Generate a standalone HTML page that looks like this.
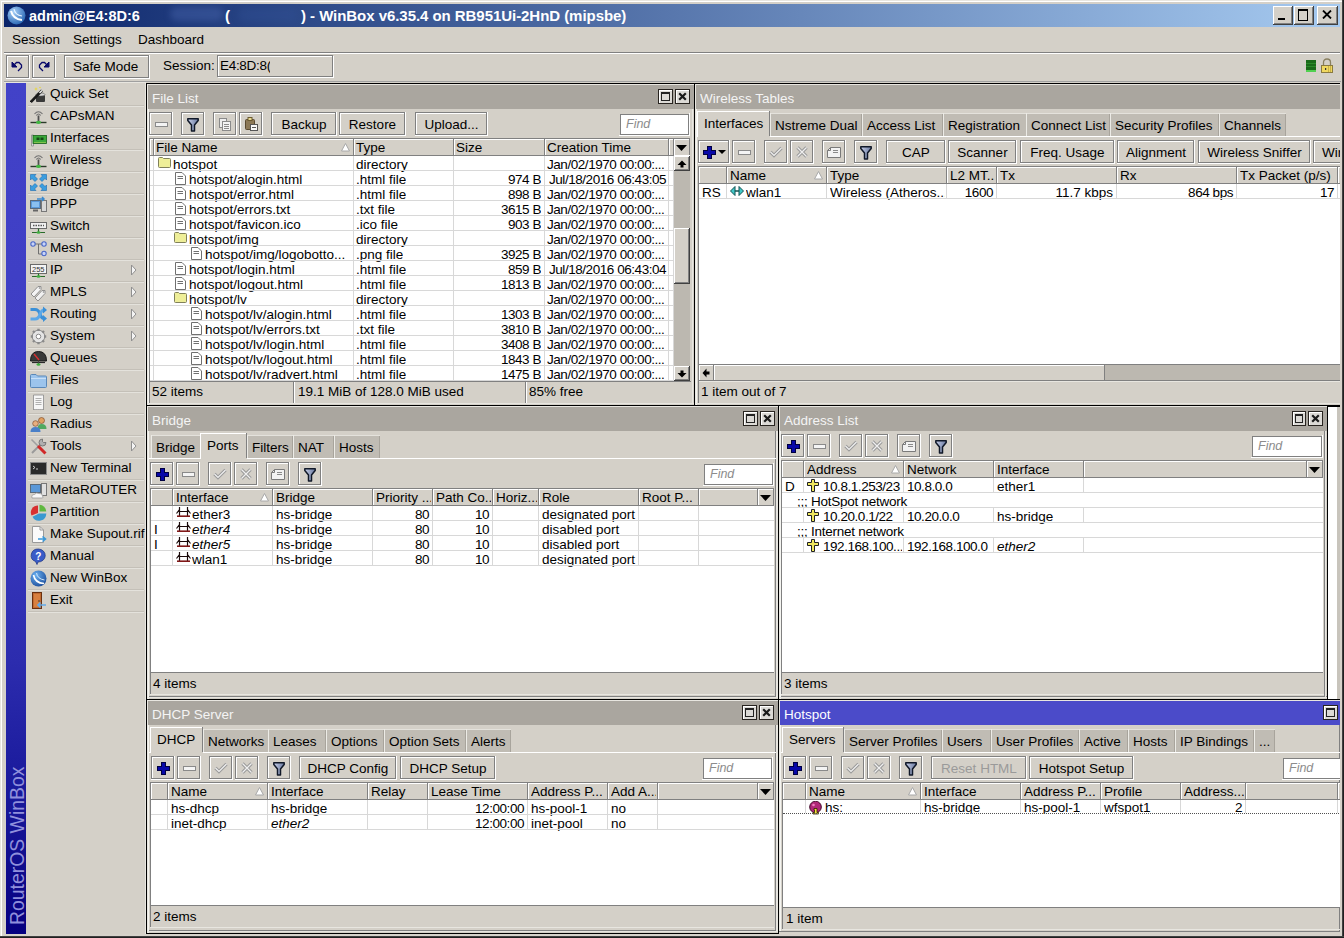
<!DOCTYPE html>
<html><head><meta charset="utf-8"><style>
html,body{margin:0;padding:0;}
body{width:1344px;height:938px;overflow:hidden;position:relative;background:#d4d0c8;font-family:"Liberation Sans",sans-serif;}
#root>div,#root>svg{position:absolute;}
#root>div{white-space:nowrap;}
#root{position:absolute;left:0;top:0;width:1344px;height:938px;overflow:hidden;}
</style></head><body><div id="root">
<div style="left:0px;top:0px;width:1344px;height:938px;background:#d4d0c8;"></div>
<div style="left:0px;top:0px;width:1344px;height:1px;background:#e8e6e0;"></div>
<div style="left:0px;top:0px;width:1px;height:938px;background:#e8e6e0;"></div>
<div style="left:1px;top:1px;width:1342px;height:1px;background:#ffffff;"></div>
<div style="left:1px;top:1px;width:1px;height:936px;background:#ffffff;"></div>
<div style="left:1342px;top:0px;width:1px;height:938px;background:#404040;"></div>
<div style="left:1343px;top:0px;width:1px;height:938px;background:#202020;"></div>
<div style="left:0px;top:936px;width:1344px;height:1px;background:#404040;"></div>
<div style="left:0px;top:937px;width:1344px;height:1px;background:#202020;"></div>
<div style="left:4px;top:4px;width:1336px;height:23px;background:linear-gradient(to right,#0a246a 0%,#a6caf0 100%);"></div>
<svg style="left:7px;top:6px" width="19" height="19" viewBox="0 0 19 19"><defs><radialGradient id="ai" cx="0.35" cy="0.3" r="0.8"><stop offset="0" stop-color="#a8d0f8"/><stop offset="1" stop-color="#2060b0"/></radialGradient></defs><circle cx="9.5" cy="9.5" r="9" fill="url(#ai)"/><path d="M4,5 Q6,13 15,14" fill="none" stroke="#fff" stroke-width="2"/><path d="M7,3 Q8,9 15,10" fill="none" stroke="#e8f4ff" stroke-width="1.2"/></svg>
<div style="left:29px;top:9px;font-size:14.5px;line-height:14.5px;color:#ffffff;font-weight:bold;">admin@E4:8D:6</div>
<div style="left:170px;top:7px;width:53px;height:14px;background:rgba(70,100,170,0.45);filter:blur(3px);border-radius:8px;"></div>
<div style="left:238px;top:8px;width:59px;height:14px;background:rgba(50,80,150,0.35);filter:blur(3px);border-radius:8px;"></div>
<div style="left:225px;top:8px;font-size:15px;line-height:15px;color:#ffffff;font-weight:bold;">(</div>
<div style="left:301px;top:8px;font-size:15px;line-height:15px;color:#ffffff;font-weight:bold;letter-spacing:-0.05px;">) - WinBox v6.35.4 on RB951Ui-2HnD (mipsbe)</div>
<div style="left:1273px;top:6px;width:20px;height:19px;background:#d4d0c8;"></div>
<div style="left:1273px;top:6px;width:20px;height:1px;background:#ffffff;"></div>
<div style="left:1273px;top:6px;width:1px;height:19px;background:#ffffff;"></div>
<div style="left:1273px;top:24px;width:20px;height:1px;background:#404040;"></div>
<div style="left:1292px;top:6px;width:1px;height:19px;background:#404040;"></div>
<div style="left:1274px;top:23px;width:18px;height:1px;background:#808080;"></div>
<div style="left:1291px;top:7px;width:1px;height:17px;background:#808080;"></div>
<div style="left:1278px;top:18px;width:7px;height:2px;background:#000;"></div>
<div style="left:1294px;top:6px;width:20px;height:19px;background:#d4d0c8;"></div>
<div style="left:1294px;top:6px;width:20px;height:1px;background:#ffffff;"></div>
<div style="left:1294px;top:6px;width:1px;height:19px;background:#ffffff;"></div>
<div style="left:1294px;top:24px;width:20px;height:1px;background:#404040;"></div>
<div style="left:1313px;top:6px;width:1px;height:19px;background:#404040;"></div>
<div style="left:1295px;top:23px;width:18px;height:1px;background:#808080;"></div>
<div style="left:1312px;top:7px;width:1px;height:17px;background:#808080;"></div>
<div style="left:1298px;top:9px;width:10px;height:12px;border:1px solid #000;border-top-width:2px;box-sizing:border-box;"></div>
<div style="left:1317px;top:6px;width:21px;height:19px;background:#d4d0c8;"></div>
<div style="left:1317px;top:6px;width:21px;height:1px;background:#ffffff;"></div>
<div style="left:1317px;top:6px;width:1px;height:19px;background:#ffffff;"></div>
<div style="left:1317px;top:24px;width:21px;height:1px;background:#404040;"></div>
<div style="left:1337px;top:6px;width:1px;height:19px;background:#404040;"></div>
<div style="left:1318px;top:23px;width:19px;height:1px;background:#808080;"></div>
<div style="left:1336px;top:7px;width:1px;height:17px;background:#808080;"></div>
<svg style="left:1322px;top:10px" width="10" height="9" viewBox="0 0 10 9"><path d="M1,0.5 L9,8.5 M9,0.5 L1,8.5" stroke="#000" stroke-width="1.8"/></svg>
<div style="left:12px;top:33px;font-size:13.5px;line-height:13.5px;color:#000000;">Session</div>
<div style="left:73px;top:33px;font-size:13.5px;line-height:13.5px;color:#000000;">Settings</div>
<div style="left:138px;top:33px;font-size:13.5px;line-height:13.5px;color:#000000;">Dashboard</div>
<div style="left:4px;top:52px;width:1336px;height:1px;background:#808080;"></div>
<div style="left:4px;top:53px;width:1336px;height:1px;background:#ffffff;"></div>
<div style="left:6px;top:55px;width:24px;height:24px;background:#d4d0c8;"></div>
<div style="left:6px;top:55px;width:24px;height:1px;background:#808080;"></div>
<div style="left:6px;top:55px;width:1px;height:24px;background:#808080;"></div>
<div style="left:6px;top:78px;width:24px;height:1px;background:#ffffff;"></div>
<div style="left:29px;top:55px;width:1px;height:24px;background:#ffffff;"></div>
<div style="left:7px;top:56px;width:22px;height:1px;background:#ffffff;"></div>
<div style="left:7px;top:56px;width:1px;height:22px;background:#ffffff;"></div>
<div style="left:7px;top:77px;width:22px;height:1px;background:#808080;"></div>
<div style="left:28px;top:56px;width:1px;height:22px;background:#808080;"></div>
<div style="left:32px;top:55px;width:24px;height:24px;background:#d4d0c8;"></div>
<div style="left:32px;top:55px;width:24px;height:1px;background:#808080;"></div>
<div style="left:32px;top:55px;width:1px;height:24px;background:#808080;"></div>
<div style="left:32px;top:78px;width:24px;height:1px;background:#ffffff;"></div>
<div style="left:55px;top:55px;width:1px;height:24px;background:#ffffff;"></div>
<div style="left:33px;top:56px;width:22px;height:1px;background:#ffffff;"></div>
<div style="left:33px;top:56px;width:1px;height:22px;background:#ffffff;"></div>
<div style="left:33px;top:77px;width:22px;height:1px;background:#808080;"></div>
<div style="left:54px;top:56px;width:1px;height:22px;background:#808080;"></div>
<svg style="left:11px;top:61px" width="13" height="11" viewBox="0 0 13 11"><path d="M1,1 L6,6 L1,6 Z" fill="#0a0a6a" stroke="#0a0a6a"/><path d="M3.5,3.5 L5.5,1.5 H8 L10.5,4 V6.5 L7,10" fill="none" stroke="#0a0a6a" stroke-width="1.3"/></svg>
<svg style="left:37px;top:61px" width="13" height="11" viewBox="0 0 13 11"><path d="M12,1 L7,6 L12,6 Z" fill="#0a0a6a" stroke="#0a0a6a"/><path d="M9.5,3.5 L7.5,1.5 H5 L2.5,4 V6.5 L6,10" fill="none" stroke="#0a0a6a" stroke-width="1.3"/></svg>
<div style="left:64px;top:55px;width:86px;height:24px;background:#d4d0c8;"></div>
<div style="left:64px;top:55px;width:86px;height:1px;background:#808080;"></div>
<div style="left:64px;top:55px;width:1px;height:24px;background:#808080;"></div>
<div style="left:64px;top:78px;width:86px;height:1px;background:#ffffff;"></div>
<div style="left:149px;top:55px;width:1px;height:24px;background:#ffffff;"></div>
<div style="left:65px;top:56px;width:84px;height:1px;background:#ffffff;"></div>
<div style="left:65px;top:56px;width:1px;height:22px;background:#ffffff;"></div>
<div style="left:65px;top:77px;width:84px;height:1px;background:#808080;"></div>
<div style="left:148px;top:56px;width:1px;height:22px;background:#808080;"></div>
<div style="left:73px;top:60px;font-size:13.5px;line-height:13.5px;color:#000000;">Safe Mode</div>
<div style="left:163px;top:59px;font-size:13.5px;line-height:13.5px;color:#000000;">Session:</div>
<div style="left:217px;top:55px;width:116px;height:22px;background:#d4d0c8;"></div>
<div style="left:217px;top:55px;width:116px;height:1px;background:#808080;"></div>
<div style="left:217px;top:55px;width:1px;height:22px;background:#808080;"></div>
<div style="left:217px;top:76px;width:116px;height:1px;background:#808080;"></div>
<div style="left:332px;top:55px;width:1px;height:22px;background:#808080;"></div>
<div style="left:218px;top:77px;width:116px;height:1px;background:#ffffff;"></div>
<div style="left:333px;top:56px;width:1px;height:22px;background:#ffffff;"></div>
<div style="left:218px;top:56px;width:114px;height:1px;background:#ffffff;"></div>
<div style="left:218px;top:56px;width:1px;height:20px;background:#ffffff;"></div>
<div style="left:220px;top:59px;font-size:13.5px;line-height:13.5px;color:#000000;width:50px;overflow:hidden;letter-spacing:-0.3px;">E4:8D:8(</div>
<div style="left:1306px;top:60px;width:10px;height:12px;background:#1a6a1a;"></div>
<div style="left:1306px;top:63px;width:10px;height:1px;background:#2a8a2a;"></div>
<div style="left:1306px;top:66px;width:10px;height:1px;background:#2a8a2a;"></div>
<div style="left:1306px;top:70px;width:10px;height:2px;background:#50d050;"></div>
<svg style="left:1320px;top:58px" width="14" height="16" viewBox="0 0 14 16"><path d="M3.5,7 V4.5 Q3.5,1 7,1 Q10.5,1 10.5,4.5 V7" fill="none" stroke="#8a8060" stroke-width="1.3"/><rect x="1.5" y="7.5" width="11" height="7" fill="#f0d860" stroke="#8a7a40"/><path d="M8.5,8 V14 M10.5,8 V14" stroke="#c0a840" stroke-width="0.8"/><rect x="5" y="10" width="1.2" height="2" fill="#333"/></svg>
<div style="left:4px;top:81px;width:1337px;height:1px;background:#a0a0a0;"></div>
<div style="left:4px;top:82px;width:142px;height:1px;background:#e8e6e0;"></div>
<div style="left:6px;top:83px;width:20px;height:851px;background:linear-gradient(to bottom,#4242c8 0%,#3c3cc2 45%,#2c2cae 68%,#18189a 84%,#060080 100%);"></div>
<div style="left:23px;top:-1px;font-size:1px;line-height:1px;color:#000000;"></div>
<div style="left:7.2px;top:925px;width:300px;height:20px;transform-origin:0 0;transform:rotate(-90deg);font-size:19.4px;line-height:20px;color:#9090dc;white-space:nowrap;">RouterOS WinBox</div>
<div style="left:145px;top:82px;width:1px;height:854px;background:#e8e6e0;"></div>
<div style="left:50px;top:87px;font-size:13.5px;line-height:13.5px;color:#000000;">Quick Set</div>
<div style="left:28px;top:105px;width:116px;height:1px;background:#c4c0b8;"></div>
<div style="left:28px;top:106px;width:116px;height:1px;background:#e4e2dc;"></div>
<svg style="left:30px;top:86px" width="17" height="17" viewBox="0 0 17 17"><path d="M6,8 H15 V15 Q15,16 14,16 H7 Q6,16 6,15 Z" fill="#3a3a3a"/><ellipse cx="10.5" cy="8.5" rx="4.5" ry="1.6" fill="#d8d8d8" stroke="#555" stroke-width="0.6"/><path d="M0.8,16 L12,4.5" stroke="#1a1a1a" stroke-width="2.6"/><path d="M9.5,7 L12,4.5" stroke="#eee" stroke-width="1.6"/><path d="M6,1 L6.6,2.6 L8,3 L6.6,3.4 L6,5 L5.4,3.4 L4,3 L5.4,2.6 Z" fill="#e8d840"/><circle cx="10" cy="1.5" r="0.8" fill="#e8d840"/></svg>
<div style="left:50px;top:109px;font-size:13.5px;line-height:13.5px;color:#000000;">CAPsMAN</div>
<div style="left:28px;top:127px;width:116px;height:1px;background:#c4c0b8;"></div>
<div style="left:28px;top:128px;width:116px;height:1px;background:#e4e2dc;"></div>
<svg style="left:30px;top:108px" width="17" height="17" viewBox="0 0 17 17"><path d="M4.5,6 Q8.5,1.5 12.5,6" fill="none" stroke="#707070" stroke-width="1.1"/><path d="M6.3,7.5 Q8.5,4.5 10.7,7.5" fill="none" stroke="#707070" stroke-width="1.1"/><rect x="7.6" y="7.5" width="1.8" height="6.5" fill="#505050"/><path d="M0.5,14.5 H16.5" stroke="#2a3a2a" stroke-width="1.4"/><ellipse cx="8.5" cy="14.3" rx="2.6" ry="1.6" fill="#40b840"/></svg>
<div style="left:50px;top:131px;font-size:13.5px;line-height:13.5px;color:#000000;">Interfaces</div>
<div style="left:28px;top:149px;width:116px;height:1px;background:#c4c0b8;"></div>
<div style="left:28px;top:150px;width:116px;height:1px;background:#e4e2dc;"></div>
<svg style="left:30px;top:130px" width="17" height="17" viewBox="0 0 17 17"><path d="M1.5,5 H3.5 V16 H1.5 Z" fill="#e0e0e0" stroke="#888" stroke-width="0.8"/><rect x="3" y="5.5" width="13.5" height="8" fill="#3aa83a" stroke="#1a601a" stroke-width="0.8"/><rect x="6.5" y="7.5" width="3" height="2.5" fill="#164a16"/><rect x="10.5" y="7.5" width="3" height="2.5" fill="#164a16"/><path d="M4.5,12.5 H15.5" stroke="#c8e060" stroke-dasharray="1 1" stroke-width="1.2"/></svg>
<div style="left:50px;top:153px;font-size:13.5px;line-height:13.5px;color:#000000;">Wireless</div>
<div style="left:28px;top:171px;width:116px;height:1px;background:#c4c0b8;"></div>
<div style="left:28px;top:172px;width:116px;height:1px;background:#e4e2dc;"></div>
<svg style="left:30px;top:152px" width="17" height="17" viewBox="0 0 17 17"><path d="M4.5,6 Q8.5,1.5 12.5,6" fill="none" stroke="#707070" stroke-width="1.1"/><path d="M6.3,7.5 Q8.5,4.5 10.7,7.5" fill="none" stroke="#707070" stroke-width="1.1"/><rect x="7.6" y="7.5" width="1.8" height="6.5" fill="#505050"/><path d="M0.5,14.5 H16.5" stroke="#2a3a2a" stroke-width="1.4"/><ellipse cx="8.5" cy="14.3" rx="2.6" ry="1.6" fill="#40b840"/></svg>
<div style="left:50px;top:175px;font-size:13.5px;line-height:13.5px;color:#000000;">Bridge</div>
<div style="left:28px;top:193px;width:116px;height:1px;background:#c4c0b8;"></div>
<div style="left:28px;top:194px;width:116px;height:1px;background:#e4e2dc;"></div>
<svg style="left:30px;top:174px" width="17" height="17" viewBox="0 0 17 17"><g fill="#3a9ee0" stroke="#1a6ab0" stroke-width="0.6"><path d="M0.5,0.5 H6 L4.5,2 L7.5,5 L5,7.5 L2,4.5 L0.5,6 Z"/><path d="M16.5,0.5 V6 L15,4.5 L12,7.5 L9.5,5 L12.5,2 L11,0.5 Z"/><path d="M0.5,16.5 V11 L2,12.5 L5,9.5 L7.5,12 L4.5,15 L6,16.5 Z"/><path d="M16.5,16.5 H11 L12.5,15 L9.5,12 L12,9.5 L15,12.5 L16.5,11 Z"/></g></svg>
<div style="left:50px;top:197px;font-size:13.5px;line-height:13.5px;color:#000000;">PPP</div>
<div style="left:28px;top:215px;width:116px;height:1px;background:#c4c0b8;"></div>
<div style="left:28px;top:216px;width:116px;height:1px;background:#e4e2dc;"></div>
<svg style="left:30px;top:196px" width="17" height="17" viewBox="0 0 17 17"><rect x="0.5" y="4.5" width="10" height="8" fill="#5a98d8" stroke="#5a6a7a"/><rect x="2" y="6" width="7" height="5" fill="#8ac0f0"/><path d="M3,14.5 H8" stroke="#666" stroke-width="2"/><rect x="11.5" y="4.5" width="5" height="11" fill="#d8d8d8" stroke="#777"/><path d="M7,3 H14 M12,1 L14,3 L12,5" fill="none" stroke="#3a8ad0" stroke-width="1.5"/></svg>
<div style="left:50px;top:219px;font-size:13.5px;line-height:13.5px;color:#000000;">Switch</div>
<div style="left:28px;top:237px;width:116px;height:1px;background:#c4c0b8;"></div>
<div style="left:28px;top:238px;width:116px;height:1px;background:#e4e2dc;"></div>
<svg style="left:30px;top:218px" width="17" height="17" viewBox="0 0 17 17"><rect x="0.5" y="4.5" width="16" height="6" fill="#f0f0f0" stroke="#6a6a6a"/><path d="M3,7.5 H14" stroke="#555" stroke-dasharray="1.5 1" stroke-width="1.5"/><path d="M8.5,10.5 V14 M2,14.5 H15" stroke="#2a6a2a" stroke-width="1.2"/><ellipse cx="8.5" cy="14.5" rx="2" ry="1.2" fill="#40b040"/></svg>
<div style="left:50px;top:241px;font-size:13.5px;line-height:13.5px;color:#000000;">Mesh</div>
<div style="left:28px;top:259px;width:116px;height:1px;background:#c4c0b8;"></div>
<div style="left:28px;top:260px;width:116px;height:1px;background:#e4e2dc;"></div>
<svg style="left:30px;top:240px" width="17" height="17" viewBox="0 0 17 17"><path d="M4,4 H8.5 V14 H12 M8.5,4 H12" fill="none" stroke="#707070" stroke-width="1"/><circle cx="3" cy="4" r="2.2" fill="#c8d4f8" stroke="#4a68c8" stroke-width="1.1"/><circle cx="14" cy="4" r="2.2" fill="#c8d4f8" stroke="#4a68c8" stroke-width="1.1"/><circle cx="14" cy="13.5" r="2.2" fill="#c8d4f8" stroke="#4a68c8" stroke-width="1.1"/></svg>
<div style="left:50px;top:263px;font-size:13.5px;line-height:13.5px;color:#000000;">IP</div>
<div style="left:28px;top:281px;width:116px;height:1px;background:#c4c0b8;"></div>
<div style="left:28px;top:282px;width:116px;height:1px;background:#e4e2dc;"></div>
<svg style="left:130px;top:264px" width="7" height="12" viewBox="0 0 7 12"><path d="M1.5,1 L6,6 L1.5,11 Z" fill="#f4f4f4" stroke="#909090"/></svg>
<svg style="left:30px;top:262px" width="17" height="17" viewBox="0 0 17 17"><rect x="0.5" y="2.5" width="16" height="9" fill="#f4f4f4" stroke="#6a6a6a"/><text x="2" y="10" font-size="7.5" fill="#333" font-family="Liberation Sans">255</text><path d="M8.5,11.5 V14.5 M2,14.5 H15" stroke="#2a6a2a" stroke-width="1.2"/><ellipse cx="8.5" cy="14.5" rx="2" ry="1.2" fill="#40b040"/></svg>
<div style="left:50px;top:285px;font-size:13.5px;line-height:13.5px;color:#000000;">MPLS</div>
<div style="left:28px;top:303px;width:116px;height:1px;background:#c4c0b8;"></div>
<div style="left:28px;top:304px;width:116px;height:1px;background:#e4e2dc;"></div>
<svg style="left:130px;top:286px" width="7" height="12" viewBox="0 0 7 12"><path d="M1.5,1 L6,6 L1.5,11 Z" fill="#f4f4f4" stroke="#909090"/></svg>
<svg style="left:30px;top:284px" width="17" height="17" viewBox="0 0 17 17"><path d="M1,10 L8,2.5 L11,2.5 L11,5.5 L4,13 Z" fill="#f4f4f4" stroke="#909090"/><path d="M5,14 L12,6.5 L15,6.5 L15,9.5 L8,17 Z" fill="#f0f0f0" stroke="#909090"/><circle cx="9.5" cy="4" r="0.8" fill="#888"/><circle cx="13.5" cy="8" r="0.8" fill="#888"/></svg>
<div style="left:50px;top:307px;font-size:13.5px;line-height:13.5px;color:#000000;">Routing</div>
<div style="left:28px;top:325px;width:116px;height:1px;background:#c4c0b8;"></div>
<div style="left:28px;top:326px;width:116px;height:1px;background:#e4e2dc;"></div>
<svg style="left:130px;top:308px" width="7" height="12" viewBox="0 0 7 12"><path d="M1.5,1 L6,6 L1.5,11 Z" fill="#f4f4f4" stroke="#909090"/></svg>
<svg style="left:30px;top:306px" width="17" height="17" viewBox="0 0 17 17"><path d="M0.5,3.5 H5 Q8.5,3.5 10,8 Q11.5,12.5 14,12.5" fill="none" stroke="#3a90d8" stroke-width="3"/><path d="M0.5,13 H5 Q8.5,13 10,8.5 Q11.5,4 14,4" fill="none" stroke="#5aa8e8" stroke-width="3"/><path d="M13,0.5 L17,4 L13,7.5 Z M13,9 L17,12.5 L13,16 Z" fill="#3a90d8"/></svg>
<div style="left:50px;top:329px;font-size:13.5px;line-height:13.5px;color:#000000;">System</div>
<div style="left:28px;top:347px;width:116px;height:1px;background:#c4c0b8;"></div>
<div style="left:28px;top:348px;width:116px;height:1px;background:#e4e2dc;"></div>
<svg style="left:130px;top:330px" width="7" height="12" viewBox="0 0 7 12"><path d="M1.5,1 L6,6 L1.5,11 Z" fill="#f4f4f4" stroke="#909090"/></svg>
<svg style="left:30px;top:328px" width="17" height="17" viewBox="0 0 17 17"><circle cx="8.5" cy="8.5" r="6.3" fill="#e4e4e4" stroke="#8a8a8a" stroke-width="1"/><path d="M8.5,0.8 V3 M8.5,14 V16.2 M0.8,8.5 H3 M14,8.5 H16.2 M3,3 L4.6,4.6 M12.4,12.4 L14,14 M3,14 L4.6,12.4 M12.4,4.6 L14,3" stroke="#8a8a8a" stroke-width="2.4"/><circle cx="8.5" cy="8.5" r="2.3" fill="#fff" stroke="#8a8a8a"/></svg>
<div style="left:50px;top:351px;font-size:13.5px;line-height:13.5px;color:#000000;">Queues</div>
<div style="left:28px;top:369px;width:116px;height:1px;background:#c4c0b8;"></div>
<div style="left:28px;top:370px;width:116px;height:1px;background:#e4e2dc;"></div>
<svg style="left:30px;top:350px" width="17" height="17" viewBox="0 0 17 17"><path d="M0.5,11 Q0.5,1.5 8.5,1.5 Q16.5,1.5 16.5,11 Z" fill="#3a3a3a" stroke="#1a1a1a"/><path d="M4,4 L9,10" stroke="#d83030" stroke-width="1.4"/><path d="M2,12.5 H15" stroke="#2a2a2a" stroke-width="1.2"/><path d="M8.5,11 V14" stroke="#444"/><ellipse cx="8.5" cy="14.5" rx="2" ry="1.3" fill="#40b040"/></svg>
<div style="left:50px;top:373px;font-size:13.5px;line-height:13.5px;color:#000000;">Files</div>
<div style="left:28px;top:391px;width:116px;height:1px;background:#c4c0b8;"></div>
<div style="left:28px;top:392px;width:116px;height:1px;background:#e4e2dc;"></div>
<svg style="left:30px;top:372px" width="17" height="17" viewBox="0 0 17 17"><path d="M0.5,3.5 Q0.5,2.5 1.5,2.5 H6 L7.5,4 H15.5 Q16.5,4 16.5,5 V14.5 Q16.5,15.5 15.5,15.5 H1.5 Q0.5,15.5 0.5,14.5 Z" fill="#9cc4ec" stroke="#5a88b8"/><path d="M1,6.5 H16" stroke="#c8e0f8"/></svg>
<div style="left:50px;top:395px;font-size:13.5px;line-height:13.5px;color:#000000;">Log</div>
<div style="left:28px;top:413px;width:116px;height:1px;background:#c4c0b8;"></div>
<div style="left:28px;top:414px;width:116px;height:1px;background:#e4e2dc;"></div>
<svg style="left:30px;top:394px" width="17" height="17" viewBox="0 0 17 17"><path d="M3.5,1 H13.5 V16 L12.5,15 L11.5,16 L10.5,15 L9.5,16 L8.5,15 L7.5,16 L6.5,15 L5.5,16 L4.5,15 L3.5,16 Z" fill="#f6f6f6" stroke="#8a8a8a" stroke-width="0.8"/><path d="M5.5,4.5 H11.5 M5.5,6.5 H11.5 M5.5,8.5 H11.5 M5.5,10.5 H11.5" stroke="#b0b0b0"/></svg>
<div style="left:50px;top:417px;font-size:13.5px;line-height:13.5px;color:#000000;">Radius</div>
<div style="left:28px;top:435px;width:116px;height:1px;background:#c4c0b8;"></div>
<div style="left:28px;top:436px;width:116px;height:1px;background:#e4e2dc;"></div>
<svg style="left:30px;top:416px" width="17" height="17" viewBox="0 0 17 17"><circle cx="11.5" cy="4.5" r="3" fill="#e0a060" stroke="#704020" stroke-width="0.6"/><path d="M7.5,13 Q7.5,8 11.5,8 Q16.5,8 16.5,13 Z" fill="#50a860"/><circle cx="5.5" cy="7.5" r="2.8" fill="#e8b080" stroke="#704020" stroke-width="0.6"/><path d="M0.5,16 Q0.5,11 5.5,11 Q10.5,11 10.5,16 Z" fill="#4a80c8"/></svg>
<div style="left:50px;top:439px;font-size:13.5px;line-height:13.5px;color:#000000;">Tools</div>
<div style="left:28px;top:457px;width:116px;height:1px;background:#c4c0b8;"></div>
<div style="left:28px;top:458px;width:116px;height:1px;background:#e4e2dc;"></div>
<svg style="left:130px;top:440px" width="7" height="12" viewBox="0 0 7 12"><path d="M1.5,1 L6,6 L1.5,11 Z" fill="#f4f4f4" stroke="#909090"/></svg>
<svg style="left:30px;top:438px" width="17" height="17" viewBox="0 0 17 17"><path d="M2,15 L12,5" stroke="#9a9a9a" stroke-width="2"/><path d="M12.5,1 A3.5,3.5 0 1 0 16,4.5 L13.5,4.5 L12.5,3.5 Z" fill="#b0b0b0" stroke="#6a6a6a" stroke-width="0.8"/><path d="M1.5,1.5 L8,8" stroke="#a0a0a0" stroke-width="1.6"/><path d="M8,8 L15.5,15.5" stroke="#d02828" stroke-width="3"/></svg>
<div style="left:50px;top:461px;font-size:13.5px;line-height:13.5px;color:#000000;">New Terminal</div>
<div style="left:28px;top:479px;width:116px;height:1px;background:#c4c0b8;"></div>
<div style="left:28px;top:480px;width:116px;height:1px;background:#e4e2dc;"></div>
<svg style="left:30px;top:460px" width="17" height="17" viewBox="0 0 17 17"><rect x="0.5" y="2.5" width="16" height="12" fill="#2a2a2a" stroke="#8a8a8a"/><path d="M3,6 L5,7.5 L3,9 M6,9 H8" stroke="#ddd" stroke-width="0.9" fill="none"/></svg>
<div style="left:50px;top:483px;font-size:13.5px;line-height:13.5px;color:#000000;">MetaROUTER</div>
<div style="left:28px;top:501px;width:116px;height:1px;background:#c4c0b8;"></div>
<div style="left:28px;top:502px;width:116px;height:1px;background:#e4e2dc;"></div>
<svg style="left:30px;top:482px" width="17" height="17" viewBox="0 0 17 17"><rect x="0.5" y="2.5" width="10" height="8" fill="#5a98d8" stroke="#5a6a7a"/><rect x="11.5" y="1.5" width="5" height="12" fill="#e0e0e0" stroke="#777"/><path d="M2,16 Q1,12.5 4.5,12.5 Q6,10 9,11.5 Q12.5,11 12.5,14 Q14,16 12,16 Z" fill="#f8f8f8" stroke="#9a9a9a" stroke-width="0.8"/></svg>
<div style="left:50px;top:505px;font-size:13.5px;line-height:13.5px;color:#000000;">Partition</div>
<div style="left:28px;top:523px;width:116px;height:1px;background:#c4c0b8;"></div>
<div style="left:28px;top:524px;width:116px;height:1px;background:#e4e2dc;"></div>
<svg style="left:30px;top:504px" width="17" height="17" viewBox="0 0 17 17"><path d="M8,9 V1.5 A7,7 0 0 0 1.5,11.5 Z" fill="#d83030"/><path d="M9.5,7.5 V0.8 A7,7 0 0 1 16.2,7.5 Z" fill="#60b840"/><path d="M9,9.5 H16.3 A7.3,7.3 0 0 1 2.5,12.8 Z" fill="#3a98d0"/></svg>
<div style="left:50px;top:527px;font-size:13.5px;line-height:13.5px;color:#000000;">Make Supout.rif</div>
<div style="left:28px;top:545px;width:116px;height:1px;background:#c4c0b8;"></div>
<div style="left:28px;top:546px;width:116px;height:1px;background:#e4e2dc;"></div>
<svg style="left:30px;top:526px" width="17" height="17" viewBox="0 0 17 17"><path d="M2.5,0.5 H10 L13.5,4 V16.5 H2.5 Z" fill="#fafafa" stroke="#9a9a9a"/><path d="M10,0.5 V4 H13.5" fill="none" stroke="#9a9a9a"/><path d="M8,13 H15 M12.5,10.5 L15.5,13 L12.5,15.5" fill="none" stroke="#3a98d8" stroke-width="1.6"/></svg>
<div style="left:50px;top:549px;font-size:13.5px;line-height:13.5px;color:#000000;">Manual</div>
<div style="left:28px;top:567px;width:116px;height:1px;background:#c4c0b8;"></div>
<div style="left:28px;top:568px;width:116px;height:1px;background:#e4e2dc;"></div>
<svg style="left:30px;top:548px" width="17" height="17" viewBox="0 0 17 17"><path d="M8.5,1 A7,6.5 0 1 1 8,14 L7,16.5 L5.5,13.5 A7,6.5 0 0 1 8.5,1 Z" fill="#3a5cc8" stroke="#1a3080" stroke-width="0.7"/><text x="5.3" y="11.5" font-size="10" font-weight="bold" fill="#fff" font-family="Liberation Sans">?</text></svg>
<div style="left:50px;top:571px;font-size:13.5px;line-height:13.5px;color:#000000;">New WinBox</div>
<div style="left:28px;top:589px;width:116px;height:1px;background:#c4c0b8;"></div>
<div style="left:28px;top:590px;width:116px;height:1px;background:#e4e2dc;"></div>
<svg style="left:30px;top:570px" width="17" height="17" viewBox="0 0 17 17"><defs><radialGradient id="nw" cx="0.35" cy="0.3" r="0.8"><stop offset="0" stop-color="#6ab0f0"/><stop offset="1" stop-color="#1a4a98"/></radialGradient></defs><circle cx="8.5" cy="8.5" r="8" fill="url(#nw)"/><path d="M3.5,5 Q5,13 14,13.5" fill="none" stroke="#fff" stroke-width="1.6"/><path d="M6.5,3 Q7.5,9 14.5,10" fill="none" stroke="#e0f0ff" stroke-width="0.9"/></svg>
<div style="left:50px;top:593px;font-size:13.5px;line-height:13.5px;color:#000000;">Exit</div>
<div style="left:28px;top:611px;width:116px;height:1px;background:#c4c0b8;"></div>
<div style="left:28px;top:612px;width:116px;height:1px;background:#e4e2dc;"></div>
<svg style="left:30px;top:592px" width="17" height="17" viewBox="0 0 17 17"><rect x="2.5" y="0.5" width="9" height="16" fill="#c06a30" stroke="#6a3010"/><rect x="4" y="2" width="6" height="13" fill="#d88040"/><circle cx="9" cy="9" r="0.8" fill="#333"/><path d="M8,13 H16 M10.5,10.5 L8,13 L10.5,15.5" fill="none" stroke="#60a8e8" stroke-width="1.6"/></svg>
<div style="left:146px;top:83px;width:549px;height:323px;background:#d4d0c8;"></div>
<div style="left:146px;top:83px;width:549px;height:1px;background:#000;"></div>
<div style="left:146px;top:83px;width:1px;height:323px;background:#000;"></div>
<div style="left:694px;top:83px;width:1px;height:323px;background:#000;"></div>
<div style="left:146px;top:405px;width:549px;height:1px;background:#000;"></div>
<div style="left:147px;top:84px;width:547px;height:1px;background:#e8e6e0;"></div>
<div style="left:147px;top:84px;width:1px;height:321px;background:#e8e6e0;"></div>
<div style="left:148px;top:109px;width:1px;height:296px;background:#f4f4f0;"></div>
<div style="left:147px;top:403px;width:547px;height:1px;background:#e8e6e0;"></div>
<div style="left:692px;top:109px;width:1px;height:295px;background:#e8e6e0;"></div>
<div style="left:148px;top:85px;width:546px;height:24px;background:#aaa69f;"></div>
<div style="left:152px;top:92px;font-size:13.5px;line-height:13.5px;color:#f4f4f4;">File List</div>
<div style="left:658px;top:89px;width:15px;height:15px;background:#dcdad6;"></div>
<div style="left:658px;top:89px;width:15px;height:15px;border:1px solid #282420;box-sizing:border-box;"></div>
<div style="left:659px;top:90px;width:13px;height:1px;background:#fff;"></div>
<div style="left:659px;top:90px;width:1px;height:13px;background:#fff;"></div>
<div style="left:661px;top:92px;width:9px;height:9px;border:1px solid #222;border-top-width:2px;box-sizing:border-box;"></div>
<div style="left:675px;top:89px;width:15px;height:15px;background:#dcdad6;"></div>
<div style="left:675px;top:89px;width:15px;height:15px;border:1px solid #282420;box-sizing:border-box;"></div>
<div style="left:676px;top:90px;width:13px;height:1px;background:#fff;"></div>
<div style="left:676px;top:90px;width:1px;height:13px;background:#fff;"></div>
<svg style="left:678px;top:92px" width="9" height="9" viewBox="0 0 9 9"><path d="M1.2,1.2 L7.8,7.8 M7.8,1.2 L1.2,7.8" stroke="#1a1a1a" stroke-width="2.2"/></svg>
<div style="left:149px;top:112px;width:24px;height:24px;background:#d4d0c8;"></div>
<div style="left:149px;top:112px;width:24px;height:1px;background:#808080;"></div>
<div style="left:149px;top:112px;width:1px;height:24px;background:#808080;"></div>
<div style="left:149px;top:135px;width:24px;height:1px;background:#ffffff;"></div>
<div style="left:172px;top:112px;width:1px;height:24px;background:#ffffff;"></div>
<div style="left:150px;top:113px;width:22px;height:1px;background:#ffffff;"></div>
<div style="left:150px;top:113px;width:1px;height:22px;background:#ffffff;"></div>
<div style="left:150px;top:134px;width:22px;height:1px;background:#808080;"></div>
<div style="left:171px;top:113px;width:1px;height:22px;background:#808080;"></div>
<svg style="left:155px;top:122px" width="13" height="5" viewBox="0 0 13 5"><g shape-rendering="crispEdges"><rect x="0.5" y="0.5" width="12" height="4" fill="#f4f4f4" stroke="#8a8a8a"/></g></svg>
<div style="left:181px;top:112px;width:24px;height:24px;background:#d4d0c8;"></div>
<div style="left:181px;top:112px;width:24px;height:1px;background:#808080;"></div>
<div style="left:181px;top:112px;width:1px;height:24px;background:#808080;"></div>
<div style="left:181px;top:135px;width:24px;height:1px;background:#ffffff;"></div>
<div style="left:204px;top:112px;width:1px;height:24px;background:#ffffff;"></div>
<div style="left:182px;top:113px;width:22px;height:1px;background:#ffffff;"></div>
<div style="left:182px;top:113px;width:1px;height:22px;background:#ffffff;"></div>
<div style="left:182px;top:134px;width:22px;height:1px;background:#808080;"></div>
<div style="left:203px;top:113px;width:1px;height:22px;background:#808080;"></div>
<svg style="left:187px;top:118px" width="12" height="14" viewBox="0 0 12 14"><defs><linearGradient id="fg" x1="0" x2="1"><stop offset="0" stop-color="#c8d0e8"/><stop offset="1" stop-color="#6878a0"/></linearGradient></defs><path d="M0.8,0.8 H11.2 V2.5 L7.5,7 V13 H4.5 V7 L0.8,2.5 Z" fill="url(#fg)" stroke="#101828" stroke-width="1.5" stroke-linejoin="round"/></svg>
<div style="left:213px;top:112px;width:24px;height:24px;background:#d4d0c8;"></div>
<div style="left:213px;top:112px;width:24px;height:1px;background:#808080;"></div>
<div style="left:213px;top:112px;width:1px;height:24px;background:#808080;"></div>
<div style="left:213px;top:135px;width:24px;height:1px;background:#ffffff;"></div>
<div style="left:236px;top:112px;width:1px;height:24px;background:#ffffff;"></div>
<div style="left:214px;top:113px;width:22px;height:1px;background:#ffffff;"></div>
<div style="left:214px;top:113px;width:1px;height:22px;background:#ffffff;"></div>
<div style="left:214px;top:134px;width:22px;height:1px;background:#808080;"></div>
<div style="left:235px;top:113px;width:1px;height:22px;background:#808080;"></div>
<svg style="left:219px;top:118px" width="12" height="13" viewBox="0 0 12 13"><rect x="0.5" y="0.5" width="7" height="9" fill="#eee" stroke="#8a8a8a"/><rect x="3.5" y="3.5" width="8" height="9" fill="#f4f4f4" stroke="#8a8a8a"/><path d="M5,6.5 H10 M5,8.5 H10 M5,10.5 H10" stroke="#8a8a8a"/></svg>
<div style="left:239px;top:112px;width:24px;height:24px;background:#d4d0c8;"></div>
<div style="left:239px;top:112px;width:24px;height:1px;background:#808080;"></div>
<div style="left:239px;top:112px;width:1px;height:24px;background:#808080;"></div>
<div style="left:239px;top:135px;width:24px;height:1px;background:#ffffff;"></div>
<div style="left:262px;top:112px;width:1px;height:24px;background:#ffffff;"></div>
<div style="left:240px;top:113px;width:22px;height:1px;background:#ffffff;"></div>
<div style="left:240px;top:113px;width:1px;height:22px;background:#ffffff;"></div>
<div style="left:240px;top:134px;width:22px;height:1px;background:#808080;"></div>
<div style="left:261px;top:113px;width:1px;height:22px;background:#808080;"></div>
<svg style="left:245px;top:117px" width="13" height="14" viewBox="0 0 13 14"><rect x="0.5" y="2.5" width="9" height="10" rx="1" fill="#8c7856" stroke="#5a4a30"/><rect x="3" y="0.5" width="4" height="3" fill="#e8d890" stroke="#6a5a30"/><rect x="5.5" y="7.5" width="7" height="6" fill="#f8f8f8" stroke="#555"/><path d="M7,10.5 H11" stroke="#555"/></svg>
<div style="left:271px;top:112px;width:66px;height:24px;background:#d4d0c8;"></div>
<div style="left:271px;top:112px;width:66px;height:1px;background:#808080;"></div>
<div style="left:271px;top:112px;width:1px;height:24px;background:#808080;"></div>
<div style="left:271px;top:135px;width:66px;height:1px;background:#ffffff;"></div>
<div style="left:336px;top:112px;width:1px;height:24px;background:#ffffff;"></div>
<div style="left:272px;top:113px;width:64px;height:1px;background:#ffffff;"></div>
<div style="left:272px;top:113px;width:1px;height:22px;background:#ffffff;"></div>
<div style="left:272px;top:134px;width:64px;height:1px;background:#808080;"></div>
<div style="left:335px;top:113px;width:1px;height:22px;background:#808080;"></div>
<div style="left:104.0px;top:118px;width:400px;text-align:center;font-size:13.5px;line-height:13.5px;color:#000;">Backup</div>
<div style="left:339px;top:112px;width:67px;height:24px;background:#d4d0c8;"></div>
<div style="left:339px;top:112px;width:67px;height:1px;background:#808080;"></div>
<div style="left:339px;top:112px;width:1px;height:24px;background:#808080;"></div>
<div style="left:339px;top:135px;width:67px;height:1px;background:#ffffff;"></div>
<div style="left:405px;top:112px;width:1px;height:24px;background:#ffffff;"></div>
<div style="left:340px;top:113px;width:65px;height:1px;background:#ffffff;"></div>
<div style="left:340px;top:113px;width:1px;height:22px;background:#ffffff;"></div>
<div style="left:340px;top:134px;width:65px;height:1px;background:#808080;"></div>
<div style="left:404px;top:113px;width:1px;height:22px;background:#808080;"></div>
<div style="left:172.5px;top:118px;width:400px;text-align:center;font-size:13.5px;line-height:13.5px;color:#000;">Restore</div>
<div style="left:415px;top:112px;width:73px;height:24px;background:#d4d0c8;"></div>
<div style="left:415px;top:112px;width:73px;height:1px;background:#808080;"></div>
<div style="left:415px;top:112px;width:1px;height:24px;background:#808080;"></div>
<div style="left:415px;top:135px;width:73px;height:1px;background:#ffffff;"></div>
<div style="left:487px;top:112px;width:1px;height:24px;background:#ffffff;"></div>
<div style="left:416px;top:113px;width:71px;height:1px;background:#ffffff;"></div>
<div style="left:416px;top:113px;width:1px;height:22px;background:#ffffff;"></div>
<div style="left:416px;top:134px;width:71px;height:1px;background:#808080;"></div>
<div style="left:486px;top:113px;width:1px;height:22px;background:#808080;"></div>
<div style="left:251.5px;top:118px;width:400px;text-align:center;font-size:13.5px;line-height:13.5px;color:#000;">Upload...</div>
<div style="left:620px;top:114px;width:69px;height:21px;background:#ffffff;"></div>
<div style="left:620px;top:114px;width:69px;height:1px;background:#808080;"></div>
<div style="left:620px;top:114px;width:1px;height:21px;background:#808080;"></div>
<div style="left:620px;top:134px;width:69px;height:1px;background:#808080;"></div>
<div style="left:688px;top:114px;width:1px;height:21px;background:#808080;"></div>
<div style="left:619px;top:135px;width:71px;height:1px;background:#ffffff;"></div>
<div style="left:689px;top:113px;width:1px;height:23px;background:#ffffff;"></div>
<div style="left:626px;top:118px;font-size:12.5px;line-height:12.5px;color:#8c8c8c;font-style:italic;">Find</div>
<div style="left:149px;top:138px;width:541px;height:243px;background:#ffffff;"></div>
<div style="left:149px;top:138px;width:541px;height:1px;background:#808080;"></div>
<div style="left:149px;top:138px;width:1px;height:243px;background:#808080;"></div>
<div style="left:150px;top:139px;width:524px;height:16px;background:#d4d0c8;"></div>
<div style="left:150px;top:155px;width:524px;height:1px;background:#808080;"></div>
<div style="left:150px;top:139px;width:3px;height:1px;background:#ffffff;"></div>
<div style="left:150px;top:139px;width:1px;height:16px;background:#ffffff;"></div>
<div style="left:153px;top:139px;width:1px;height:16px;background:#808080;"></div>
<div style="left:154px;top:139px;width:199px;height:1px;background:#ffffff;"></div>
<div style="left:154px;top:139px;width:1px;height:16px;background:#ffffff;"></div>
<div style="left:353px;top:139px;width:1px;height:16px;background:#808080;"></div>
<div style="left:156px;top:141px;font-size:13.5px;line-height:13.5px;color:#000000;">File Name</div>
<div style="left:354px;top:139px;width:99px;height:1px;background:#ffffff;"></div>
<div style="left:354px;top:139px;width:1px;height:16px;background:#ffffff;"></div>
<div style="left:453px;top:139px;width:1px;height:16px;background:#808080;"></div>
<div style="left:356px;top:141px;font-size:13.5px;line-height:13.5px;color:#000000;">Type</div>
<div style="left:454px;top:139px;width:90px;height:1px;background:#ffffff;"></div>
<div style="left:454px;top:139px;width:1px;height:16px;background:#ffffff;"></div>
<div style="left:544px;top:139px;width:1px;height:16px;background:#808080;"></div>
<div style="left:456px;top:141px;font-size:13.5px;line-height:13.5px;color:#000000;">Size</div>
<div style="left:545px;top:139px;width:123px;height:1px;background:#ffffff;"></div>
<div style="left:545px;top:139px;width:1px;height:16px;background:#ffffff;"></div>
<div style="left:668px;top:139px;width:1px;height:16px;background:#808080;"></div>
<div style="left:547px;top:141px;font-size:13.5px;line-height:13.5px;color:#000000;">Creation Time</div>
<div style="left:669px;top:139px;width:4px;height:1px;background:#ffffff;"></div>
<div style="left:669px;top:139px;width:1px;height:16px;background:#ffffff;"></div>
<div style="left:673px;top:139px;width:1px;height:16px;background:#808080;"></div>
<svg style="left:341px;top:143px" width="10" height="9" viewBox="0 0 10 9"><path d="M4.5,0.5 L8.5,8 H0.5 Z" fill="#ffffff" stroke="#a8a8a8"/></svg>
<div style="left:674px;top:139px;width:16px;height:16px;background:#d4d0c8;"></div>
<div style="left:674px;top:139px;width:16px;height:1px;background:#ffffff;"></div>
<div style="left:674px;top:139px;width:1px;height:16px;background:#ffffff;"></div>
<div style="left:689px;top:139px;width:1px;height:16px;background:#808080;"></div>
<svg style="left:676px;top:145px" width="11" height="6" viewBox="0 0 11 6"><path d="M0,0 H11 L5.5,6 Z" fill="#000"/></svg>
<svg style="left:158px;top:157px" width="13" height="11" viewBox="0 0 13 11"><path d="M0.5,1.5 Q0.5,0.5 1.5,0.5 H4.5 L5.5,1.5 H11.5 Q12.5,1.5 12.5,2.5 V9.5 Q12.5,10.5 11.5,10.5 H1.5 Q0.5,10.5 0.5,9.5 Z" fill="#eeee98" stroke="#80805a"/></svg>
<div style="left:173px;top:157.5px;font-size:13.5px;line-height:13.5px;color:#000000;width:179px;overflow:hidden;white-space:nowrap;height:14px;">hotspot</div>
<div style="left:356px;top:157.5px;font-size:13.5px;line-height:13.5px;color:#000000;height:14px;overflow:hidden;white-space:nowrap;">directory</div>
<div style="left:547px;top:157.5px;font-size:13.5px;line-height:13.5px;color:#000000;width:121px;height:14px;overflow:hidden;white-space:nowrap;letter-spacing:-0.45px;">Jan/02/1970 00:00:...</div>
<div style="left:150px;top:170px;width:524px;height:1px;background:#d8d8d8;"></div>
<div style="left:153px;top:156px;width:1px;height:14px;background:#d8d8d8;"></div>
<div style="left:353px;top:156px;width:1px;height:14px;background:#d8d8d8;"></div>
<div style="left:453px;top:156px;width:1px;height:14px;background:#d8d8d8;"></div>
<div style="left:544px;top:156px;width:1px;height:14px;background:#d8d8d8;"></div>
<div style="left:668px;top:156px;width:1px;height:14px;background:#d8d8d8;"></div>
<div style="left:673px;top:156px;width:1px;height:14px;background:#d8d8d8;"></div>
<svg style="left:175px;top:172px" width="11" height="13" viewBox="0 0 11 13"><path d="M0.5,0.5 H7 L10.5,4 V12.5 H0.5 Z" fill="#ffffff" stroke="#707070"/><path d="M2.5,4.5 H8 M2.5,6.5 H8" stroke="#707070"/></svg>
<div style="left:189px;top:172.5px;font-size:13.5px;line-height:13.5px;color:#000000;width:163px;overflow:hidden;white-space:nowrap;height:14px;">hotspot/alogin.html</div>
<div style="left:356px;top:172.5px;font-size:13.5px;line-height:13.5px;color:#000000;height:14px;overflow:hidden;white-space:nowrap;">.html file</div>
<div style="left:241px;top:172.5px;width:300px;text-align:right;font-size:13.5px;line-height:13.5px;color:#000000;letter-spacing:-0.45px;height:14px;overflow:hidden;">974 B</div>
<div style="left:549px;top:172.5px;font-size:13.5px;line-height:13.5px;color:#000000;width:121px;height:14px;overflow:hidden;white-space:nowrap;letter-spacing:-0.45px;">Jul/18/2016 06:43:05</div>
<div style="left:150px;top:185px;width:524px;height:1px;background:#d8d8d8;"></div>
<div style="left:153px;top:171px;width:1px;height:14px;background:#d8d8d8;"></div>
<div style="left:353px;top:171px;width:1px;height:14px;background:#d8d8d8;"></div>
<div style="left:453px;top:171px;width:1px;height:14px;background:#d8d8d8;"></div>
<div style="left:544px;top:171px;width:1px;height:14px;background:#d8d8d8;"></div>
<div style="left:668px;top:171px;width:1px;height:14px;background:#d8d8d8;"></div>
<div style="left:673px;top:171px;width:1px;height:14px;background:#d8d8d8;"></div>
<svg style="left:175px;top:187px" width="11" height="13" viewBox="0 0 11 13"><path d="M0.5,0.5 H7 L10.5,4 V12.5 H0.5 Z" fill="#ffffff" stroke="#707070"/><path d="M2.5,4.5 H8 M2.5,6.5 H8" stroke="#707070"/></svg>
<div style="left:189px;top:187.5px;font-size:13.5px;line-height:13.5px;color:#000000;width:163px;overflow:hidden;white-space:nowrap;height:14px;">hotspot/error.html</div>
<div style="left:356px;top:187.5px;font-size:13.5px;line-height:13.5px;color:#000000;height:14px;overflow:hidden;white-space:nowrap;">.html file</div>
<div style="left:241px;top:187.5px;width:300px;text-align:right;font-size:13.5px;line-height:13.5px;color:#000000;letter-spacing:-0.45px;height:14px;overflow:hidden;">898 B</div>
<div style="left:547px;top:187.5px;font-size:13.5px;line-height:13.5px;color:#000000;width:121px;height:14px;overflow:hidden;white-space:nowrap;letter-spacing:-0.45px;">Jan/02/1970 00:00:...</div>
<div style="left:150px;top:200px;width:524px;height:1px;background:#d8d8d8;"></div>
<div style="left:153px;top:186px;width:1px;height:14px;background:#d8d8d8;"></div>
<div style="left:353px;top:186px;width:1px;height:14px;background:#d8d8d8;"></div>
<div style="left:453px;top:186px;width:1px;height:14px;background:#d8d8d8;"></div>
<div style="left:544px;top:186px;width:1px;height:14px;background:#d8d8d8;"></div>
<div style="left:668px;top:186px;width:1px;height:14px;background:#d8d8d8;"></div>
<div style="left:673px;top:186px;width:1px;height:14px;background:#d8d8d8;"></div>
<svg style="left:175px;top:202px" width="11" height="13" viewBox="0 0 11 13"><path d="M0.5,0.5 H7 L10.5,4 V12.5 H0.5 Z" fill="#ffffff" stroke="#707070"/><path d="M2.5,4.5 H8 M2.5,6.5 H8" stroke="#707070"/></svg>
<div style="left:189px;top:202.5px;font-size:13.5px;line-height:13.5px;color:#000000;width:163px;overflow:hidden;white-space:nowrap;height:14px;">hotspot/errors.txt</div>
<div style="left:356px;top:202.5px;font-size:13.5px;line-height:13.5px;color:#000000;height:14px;overflow:hidden;white-space:nowrap;">.txt file</div>
<div style="left:241px;top:202.5px;width:300px;text-align:right;font-size:13.5px;line-height:13.5px;color:#000000;letter-spacing:-0.45px;height:14px;overflow:hidden;">3615 B</div>
<div style="left:547px;top:202.5px;font-size:13.5px;line-height:13.5px;color:#000000;width:121px;height:14px;overflow:hidden;white-space:nowrap;letter-spacing:-0.45px;">Jan/02/1970 00:00:...</div>
<div style="left:150px;top:215px;width:524px;height:1px;background:#d8d8d8;"></div>
<div style="left:153px;top:201px;width:1px;height:14px;background:#d8d8d8;"></div>
<div style="left:353px;top:201px;width:1px;height:14px;background:#d8d8d8;"></div>
<div style="left:453px;top:201px;width:1px;height:14px;background:#d8d8d8;"></div>
<div style="left:544px;top:201px;width:1px;height:14px;background:#d8d8d8;"></div>
<div style="left:668px;top:201px;width:1px;height:14px;background:#d8d8d8;"></div>
<div style="left:673px;top:201px;width:1px;height:14px;background:#d8d8d8;"></div>
<svg style="left:175px;top:217px" width="11" height="13" viewBox="0 0 11 13"><path d="M0.5,0.5 H7 L10.5,4 V12.5 H0.5 Z" fill="#ffffff" stroke="#707070"/><path d="M2.5,4.5 H8 M2.5,6.5 H8" stroke="#707070"/></svg>
<div style="left:189px;top:217.5px;font-size:13.5px;line-height:13.5px;color:#000000;width:163px;overflow:hidden;white-space:nowrap;height:14px;">hotspot/favicon.ico</div>
<div style="left:356px;top:217.5px;font-size:13.5px;line-height:13.5px;color:#000000;height:14px;overflow:hidden;white-space:nowrap;">.ico file</div>
<div style="left:241px;top:217.5px;width:300px;text-align:right;font-size:13.5px;line-height:13.5px;color:#000000;letter-spacing:-0.45px;height:14px;overflow:hidden;">903 B</div>
<div style="left:547px;top:217.5px;font-size:13.5px;line-height:13.5px;color:#000000;width:121px;height:14px;overflow:hidden;white-space:nowrap;letter-spacing:-0.45px;">Jan/02/1970 00:00:...</div>
<div style="left:150px;top:230px;width:524px;height:1px;background:#d8d8d8;"></div>
<div style="left:153px;top:216px;width:1px;height:14px;background:#d8d8d8;"></div>
<div style="left:353px;top:216px;width:1px;height:14px;background:#d8d8d8;"></div>
<div style="left:453px;top:216px;width:1px;height:14px;background:#d8d8d8;"></div>
<div style="left:544px;top:216px;width:1px;height:14px;background:#d8d8d8;"></div>
<div style="left:668px;top:216px;width:1px;height:14px;background:#d8d8d8;"></div>
<div style="left:673px;top:216px;width:1px;height:14px;background:#d8d8d8;"></div>
<svg style="left:174px;top:232px" width="13" height="11" viewBox="0 0 13 11"><path d="M0.5,1.5 Q0.5,0.5 1.5,0.5 H4.5 L5.5,1.5 H11.5 Q12.5,1.5 12.5,2.5 V9.5 Q12.5,10.5 11.5,10.5 H1.5 Q0.5,10.5 0.5,9.5 Z" fill="#eeee98" stroke="#80805a"/></svg>
<div style="left:189px;top:232.5px;font-size:13.5px;line-height:13.5px;color:#000000;width:163px;overflow:hidden;white-space:nowrap;height:14px;">hotspot/img</div>
<div style="left:356px;top:232.5px;font-size:13.5px;line-height:13.5px;color:#000000;height:14px;overflow:hidden;white-space:nowrap;">directory</div>
<div style="left:547px;top:232.5px;font-size:13.5px;line-height:13.5px;color:#000000;width:121px;height:14px;overflow:hidden;white-space:nowrap;letter-spacing:-0.45px;">Jan/02/1970 00:00:...</div>
<div style="left:150px;top:245px;width:524px;height:1px;background:#d8d8d8;"></div>
<div style="left:153px;top:231px;width:1px;height:14px;background:#d8d8d8;"></div>
<div style="left:353px;top:231px;width:1px;height:14px;background:#d8d8d8;"></div>
<div style="left:453px;top:231px;width:1px;height:14px;background:#d8d8d8;"></div>
<div style="left:544px;top:231px;width:1px;height:14px;background:#d8d8d8;"></div>
<div style="left:668px;top:231px;width:1px;height:14px;background:#d8d8d8;"></div>
<div style="left:673px;top:231px;width:1px;height:14px;background:#d8d8d8;"></div>
<svg style="left:191px;top:247px" width="11" height="13" viewBox="0 0 11 13"><path d="M0.5,0.5 H7 L10.5,4 V12.5 H0.5 Z" fill="#ffffff" stroke="#707070"/><path d="M2.5,4.5 H8 M2.5,6.5 H8" stroke="#707070"/></svg>
<div style="left:205px;top:247.5px;font-size:13.5px;line-height:13.5px;color:#000000;width:147px;overflow:hidden;white-space:nowrap;height:14px;">hotspot/img/logobotto...</div>
<div style="left:356px;top:247.5px;font-size:13.5px;line-height:13.5px;color:#000000;height:14px;overflow:hidden;white-space:nowrap;">.png file</div>
<div style="left:241px;top:247.5px;width:300px;text-align:right;font-size:13.5px;line-height:13.5px;color:#000000;letter-spacing:-0.45px;height:14px;overflow:hidden;">3925 B</div>
<div style="left:547px;top:247.5px;font-size:13.5px;line-height:13.5px;color:#000000;width:121px;height:14px;overflow:hidden;white-space:nowrap;letter-spacing:-0.45px;">Jan/02/1970 00:00:...</div>
<div style="left:150px;top:260px;width:524px;height:1px;background:#d8d8d8;"></div>
<div style="left:153px;top:246px;width:1px;height:14px;background:#d8d8d8;"></div>
<div style="left:353px;top:246px;width:1px;height:14px;background:#d8d8d8;"></div>
<div style="left:453px;top:246px;width:1px;height:14px;background:#d8d8d8;"></div>
<div style="left:544px;top:246px;width:1px;height:14px;background:#d8d8d8;"></div>
<div style="left:668px;top:246px;width:1px;height:14px;background:#d8d8d8;"></div>
<div style="left:673px;top:246px;width:1px;height:14px;background:#d8d8d8;"></div>
<svg style="left:175px;top:262px" width="11" height="13" viewBox="0 0 11 13"><path d="M0.5,0.5 H7 L10.5,4 V12.5 H0.5 Z" fill="#ffffff" stroke="#707070"/><path d="M2.5,4.5 H8 M2.5,6.5 H8" stroke="#707070"/></svg>
<div style="left:189px;top:262.5px;font-size:13.5px;line-height:13.5px;color:#000000;width:163px;overflow:hidden;white-space:nowrap;height:14px;">hotspot/login.html</div>
<div style="left:356px;top:262.5px;font-size:13.5px;line-height:13.5px;color:#000000;height:14px;overflow:hidden;white-space:nowrap;">.html file</div>
<div style="left:241px;top:262.5px;width:300px;text-align:right;font-size:13.5px;line-height:13.5px;color:#000000;letter-spacing:-0.45px;height:14px;overflow:hidden;">859 B</div>
<div style="left:549px;top:262.5px;font-size:13.5px;line-height:13.5px;color:#000000;width:121px;height:14px;overflow:hidden;white-space:nowrap;letter-spacing:-0.45px;">Jul/18/2016 06:43:04</div>
<div style="left:150px;top:275px;width:524px;height:1px;background:#d8d8d8;"></div>
<div style="left:153px;top:261px;width:1px;height:14px;background:#d8d8d8;"></div>
<div style="left:353px;top:261px;width:1px;height:14px;background:#d8d8d8;"></div>
<div style="left:453px;top:261px;width:1px;height:14px;background:#d8d8d8;"></div>
<div style="left:544px;top:261px;width:1px;height:14px;background:#d8d8d8;"></div>
<div style="left:668px;top:261px;width:1px;height:14px;background:#d8d8d8;"></div>
<div style="left:673px;top:261px;width:1px;height:14px;background:#d8d8d8;"></div>
<svg style="left:175px;top:277px" width="11" height="13" viewBox="0 0 11 13"><path d="M0.5,0.5 H7 L10.5,4 V12.5 H0.5 Z" fill="#ffffff" stroke="#707070"/><path d="M2.5,4.5 H8 M2.5,6.5 H8" stroke="#707070"/></svg>
<div style="left:189px;top:277.5px;font-size:13.5px;line-height:13.5px;color:#000000;width:163px;overflow:hidden;white-space:nowrap;height:14px;">hotspot/logout.html</div>
<div style="left:356px;top:277.5px;font-size:13.5px;line-height:13.5px;color:#000000;height:14px;overflow:hidden;white-space:nowrap;">.html file</div>
<div style="left:241px;top:277.5px;width:300px;text-align:right;font-size:13.5px;line-height:13.5px;color:#000000;letter-spacing:-0.45px;height:14px;overflow:hidden;">1813 B</div>
<div style="left:547px;top:277.5px;font-size:13.5px;line-height:13.5px;color:#000000;width:121px;height:14px;overflow:hidden;white-space:nowrap;letter-spacing:-0.45px;">Jan/02/1970 00:00:...</div>
<div style="left:150px;top:290px;width:524px;height:1px;background:#d8d8d8;"></div>
<div style="left:153px;top:276px;width:1px;height:14px;background:#d8d8d8;"></div>
<div style="left:353px;top:276px;width:1px;height:14px;background:#d8d8d8;"></div>
<div style="left:453px;top:276px;width:1px;height:14px;background:#d8d8d8;"></div>
<div style="left:544px;top:276px;width:1px;height:14px;background:#d8d8d8;"></div>
<div style="left:668px;top:276px;width:1px;height:14px;background:#d8d8d8;"></div>
<div style="left:673px;top:276px;width:1px;height:14px;background:#d8d8d8;"></div>
<svg style="left:174px;top:292px" width="13" height="11" viewBox="0 0 13 11"><path d="M0.5,1.5 Q0.5,0.5 1.5,0.5 H4.5 L5.5,1.5 H11.5 Q12.5,1.5 12.5,2.5 V9.5 Q12.5,10.5 11.5,10.5 H1.5 Q0.5,10.5 0.5,9.5 Z" fill="#eeee98" stroke="#80805a"/></svg>
<div style="left:189px;top:292.5px;font-size:13.5px;line-height:13.5px;color:#000000;width:163px;overflow:hidden;white-space:nowrap;height:14px;">hotspot/lv</div>
<div style="left:356px;top:292.5px;font-size:13.5px;line-height:13.5px;color:#000000;height:14px;overflow:hidden;white-space:nowrap;">directory</div>
<div style="left:547px;top:292.5px;font-size:13.5px;line-height:13.5px;color:#000000;width:121px;height:14px;overflow:hidden;white-space:nowrap;letter-spacing:-0.45px;">Jan/02/1970 00:00:...</div>
<div style="left:150px;top:305px;width:524px;height:1px;background:#d8d8d8;"></div>
<div style="left:153px;top:291px;width:1px;height:14px;background:#d8d8d8;"></div>
<div style="left:353px;top:291px;width:1px;height:14px;background:#d8d8d8;"></div>
<div style="left:453px;top:291px;width:1px;height:14px;background:#d8d8d8;"></div>
<div style="left:544px;top:291px;width:1px;height:14px;background:#d8d8d8;"></div>
<div style="left:668px;top:291px;width:1px;height:14px;background:#d8d8d8;"></div>
<div style="left:673px;top:291px;width:1px;height:14px;background:#d8d8d8;"></div>
<svg style="left:191px;top:307px" width="11" height="13" viewBox="0 0 11 13"><path d="M0.5,0.5 H7 L10.5,4 V12.5 H0.5 Z" fill="#ffffff" stroke="#707070"/><path d="M2.5,4.5 H8 M2.5,6.5 H8" stroke="#707070"/></svg>
<div style="left:205px;top:307.5px;font-size:13.5px;line-height:13.5px;color:#000000;width:147px;overflow:hidden;white-space:nowrap;height:14px;">hotspot/lv/alogin.html</div>
<div style="left:356px;top:307.5px;font-size:13.5px;line-height:13.5px;color:#000000;height:14px;overflow:hidden;white-space:nowrap;">.html file</div>
<div style="left:241px;top:307.5px;width:300px;text-align:right;font-size:13.5px;line-height:13.5px;color:#000000;letter-spacing:-0.45px;height:14px;overflow:hidden;">1303 B</div>
<div style="left:547px;top:307.5px;font-size:13.5px;line-height:13.5px;color:#000000;width:121px;height:14px;overflow:hidden;white-space:nowrap;letter-spacing:-0.45px;">Jan/02/1970 00:00:...</div>
<div style="left:150px;top:320px;width:524px;height:1px;background:#d8d8d8;"></div>
<div style="left:153px;top:306px;width:1px;height:14px;background:#d8d8d8;"></div>
<div style="left:353px;top:306px;width:1px;height:14px;background:#d8d8d8;"></div>
<div style="left:453px;top:306px;width:1px;height:14px;background:#d8d8d8;"></div>
<div style="left:544px;top:306px;width:1px;height:14px;background:#d8d8d8;"></div>
<div style="left:668px;top:306px;width:1px;height:14px;background:#d8d8d8;"></div>
<div style="left:673px;top:306px;width:1px;height:14px;background:#d8d8d8;"></div>
<svg style="left:191px;top:322px" width="11" height="13" viewBox="0 0 11 13"><path d="M0.5,0.5 H7 L10.5,4 V12.5 H0.5 Z" fill="#ffffff" stroke="#707070"/><path d="M2.5,4.5 H8 M2.5,6.5 H8" stroke="#707070"/></svg>
<div style="left:205px;top:322.5px;font-size:13.5px;line-height:13.5px;color:#000000;width:147px;overflow:hidden;white-space:nowrap;height:14px;">hotspot/lv/errors.txt</div>
<div style="left:356px;top:322.5px;font-size:13.5px;line-height:13.5px;color:#000000;height:14px;overflow:hidden;white-space:nowrap;">.txt file</div>
<div style="left:241px;top:322.5px;width:300px;text-align:right;font-size:13.5px;line-height:13.5px;color:#000000;letter-spacing:-0.45px;height:14px;overflow:hidden;">3810 B</div>
<div style="left:547px;top:322.5px;font-size:13.5px;line-height:13.5px;color:#000000;width:121px;height:14px;overflow:hidden;white-space:nowrap;letter-spacing:-0.45px;">Jan/02/1970 00:00:...</div>
<div style="left:150px;top:335px;width:524px;height:1px;background:#d8d8d8;"></div>
<div style="left:153px;top:321px;width:1px;height:14px;background:#d8d8d8;"></div>
<div style="left:353px;top:321px;width:1px;height:14px;background:#d8d8d8;"></div>
<div style="left:453px;top:321px;width:1px;height:14px;background:#d8d8d8;"></div>
<div style="left:544px;top:321px;width:1px;height:14px;background:#d8d8d8;"></div>
<div style="left:668px;top:321px;width:1px;height:14px;background:#d8d8d8;"></div>
<div style="left:673px;top:321px;width:1px;height:14px;background:#d8d8d8;"></div>
<svg style="left:191px;top:337px" width="11" height="13" viewBox="0 0 11 13"><path d="M0.5,0.5 H7 L10.5,4 V12.5 H0.5 Z" fill="#ffffff" stroke="#707070"/><path d="M2.5,4.5 H8 M2.5,6.5 H8" stroke="#707070"/></svg>
<div style="left:205px;top:337.5px;font-size:13.5px;line-height:13.5px;color:#000000;width:147px;overflow:hidden;white-space:nowrap;height:14px;">hotspot/lv/login.html</div>
<div style="left:356px;top:337.5px;font-size:13.5px;line-height:13.5px;color:#000000;height:14px;overflow:hidden;white-space:nowrap;">.html file</div>
<div style="left:241px;top:337.5px;width:300px;text-align:right;font-size:13.5px;line-height:13.5px;color:#000000;letter-spacing:-0.45px;height:14px;overflow:hidden;">3408 B</div>
<div style="left:547px;top:337.5px;font-size:13.5px;line-height:13.5px;color:#000000;width:121px;height:14px;overflow:hidden;white-space:nowrap;letter-spacing:-0.45px;">Jan/02/1970 00:00:...</div>
<div style="left:150px;top:350px;width:524px;height:1px;background:#d8d8d8;"></div>
<div style="left:153px;top:336px;width:1px;height:14px;background:#d8d8d8;"></div>
<div style="left:353px;top:336px;width:1px;height:14px;background:#d8d8d8;"></div>
<div style="left:453px;top:336px;width:1px;height:14px;background:#d8d8d8;"></div>
<div style="left:544px;top:336px;width:1px;height:14px;background:#d8d8d8;"></div>
<div style="left:668px;top:336px;width:1px;height:14px;background:#d8d8d8;"></div>
<div style="left:673px;top:336px;width:1px;height:14px;background:#d8d8d8;"></div>
<svg style="left:191px;top:352px" width="11" height="13" viewBox="0 0 11 13"><path d="M0.5,0.5 H7 L10.5,4 V12.5 H0.5 Z" fill="#ffffff" stroke="#707070"/><path d="M2.5,4.5 H8 M2.5,6.5 H8" stroke="#707070"/></svg>
<div style="left:205px;top:352.5px;font-size:13.5px;line-height:13.5px;color:#000000;width:147px;overflow:hidden;white-space:nowrap;height:14px;">hotspot/lv/logout.html</div>
<div style="left:356px;top:352.5px;font-size:13.5px;line-height:13.5px;color:#000000;height:14px;overflow:hidden;white-space:nowrap;">.html file</div>
<div style="left:241px;top:352.5px;width:300px;text-align:right;font-size:13.5px;line-height:13.5px;color:#000000;letter-spacing:-0.45px;height:14px;overflow:hidden;">1843 B</div>
<div style="left:547px;top:352.5px;font-size:13.5px;line-height:13.5px;color:#000000;width:121px;height:14px;overflow:hidden;white-space:nowrap;letter-spacing:-0.45px;">Jan/02/1970 00:00:...</div>
<div style="left:150px;top:365px;width:524px;height:1px;background:#d8d8d8;"></div>
<div style="left:153px;top:351px;width:1px;height:14px;background:#d8d8d8;"></div>
<div style="left:353px;top:351px;width:1px;height:14px;background:#d8d8d8;"></div>
<div style="left:453px;top:351px;width:1px;height:14px;background:#d8d8d8;"></div>
<div style="left:544px;top:351px;width:1px;height:14px;background:#d8d8d8;"></div>
<div style="left:668px;top:351px;width:1px;height:14px;background:#d8d8d8;"></div>
<div style="left:673px;top:351px;width:1px;height:14px;background:#d8d8d8;"></div>
<svg style="left:191px;top:367px" width="11" height="13" viewBox="0 0 11 13"><path d="M0.5,0.5 H7 L10.5,4 V12.5 H0.5 Z" fill="#ffffff" stroke="#707070"/><path d="M2.5,4.5 H8 M2.5,6.5 H8" stroke="#707070"/></svg>
<div style="left:205px;top:367.5px;font-size:13.5px;line-height:13.5px;color:#000000;width:147px;overflow:hidden;white-space:nowrap;height:14px;">hotspot/lv/radvert.html</div>
<div style="left:356px;top:367.5px;font-size:13.5px;line-height:13.5px;color:#000000;height:14px;overflow:hidden;white-space:nowrap;">.html file</div>
<div style="left:241px;top:367.5px;width:300px;text-align:right;font-size:13.5px;line-height:13.5px;color:#000000;letter-spacing:-0.45px;height:14px;overflow:hidden;">1475 B</div>
<div style="left:547px;top:367.5px;font-size:13.5px;line-height:13.5px;color:#000000;width:121px;height:14px;overflow:hidden;white-space:nowrap;letter-spacing:-0.45px;">Jan/02/1970 00:00:...</div>
<div style="left:150px;top:380px;width:524px;height:1px;background:#d8d8d8;"></div>
<div style="left:153px;top:366px;width:1px;height:14px;background:#d8d8d8;"></div>
<div style="left:353px;top:366px;width:1px;height:14px;background:#d8d8d8;"></div>
<div style="left:453px;top:366px;width:1px;height:14px;background:#d8d8d8;"></div>
<div style="left:544px;top:366px;width:1px;height:14px;background:#d8d8d8;"></div>
<div style="left:668px;top:366px;width:1px;height:14px;background:#d8d8d8;"></div>
<div style="left:673px;top:366px;width:1px;height:14px;background:#d8d8d8;"></div>
<div style="left:674px;top:156px;width:16px;height:225px;background:#bcb8b0;"></div>
<div style="left:674px;top:156px;width:16px;height:15px;background:#d4d0c8;"></div>
<div style="left:674px;top:156px;width:16px;height:1px;background:#ffffff;"></div>
<div style="left:674px;top:156px;width:1px;height:15px;background:#ffffff;"></div>
<div style="left:674px;top:170px;width:16px;height:1px;background:#404040;"></div>
<div style="left:689px;top:156px;width:1px;height:15px;background:#404040;"></div>
<div style="left:675px;top:169px;width:14px;height:1px;background:#808080;"></div>
<div style="left:688px;top:157px;width:1px;height:13px;background:#808080;"></div>
<svg style="left:676.5px;top:160px" width="10" height="8" viewBox="0 0 10 8"><path d="M5,0.5 L9.5,5 H6.5 V7.5 H3.5 V5 H0.5 Z" fill="#000"/></svg>
<div style="left:674px;top:366px;width:16px;height:15px;background:#d4d0c8;"></div>
<div style="left:674px;top:366px;width:16px;height:1px;background:#ffffff;"></div>
<div style="left:674px;top:366px;width:1px;height:15px;background:#ffffff;"></div>
<div style="left:674px;top:380px;width:16px;height:1px;background:#404040;"></div>
<div style="left:689px;top:366px;width:1px;height:15px;background:#404040;"></div>
<div style="left:675px;top:379px;width:14px;height:1px;background:#808080;"></div>
<div style="left:688px;top:367px;width:1px;height:13px;background:#808080;"></div>
<svg style="left:676.5px;top:370px" width="10" height="8" viewBox="0 0 10 8"><path d="M3.5,0.5 H6.5 V3 H9.5 L5,7.5 L0.5,3 H3.5 Z" fill="#000"/></svg>
<div style="left:674px;top:228px;width:16px;height:56px;background:#d4d0c8;"></div>
<div style="left:674px;top:228px;width:16px;height:1px;background:#ffffff;"></div>
<div style="left:674px;top:228px;width:1px;height:56px;background:#ffffff;"></div>
<div style="left:674px;top:283px;width:16px;height:1px;background:#404040;"></div>
<div style="left:689px;top:228px;width:1px;height:56px;background:#404040;"></div>
<div style="left:675px;top:282px;width:14px;height:1px;background:#808080;"></div>
<div style="left:688px;top:229px;width:1px;height:54px;background:#808080;"></div>
<div style="left:149px;top:381px;width:542px;height:1px;background:#808080;"></div>
<div style="left:149px;top:382px;width:1px;height:21px;background:#808080;"></div>
<div style="left:152px;top:385px;font-size:13.5px;line-height:13.5px;color:#000000;">52 items</div>
<div style="left:293px;top:382px;width:1px;height:21px;background:#808080;"></div>
<div style="left:294px;top:382px;width:1px;height:21px;background:#ffffff;"></div>
<div style="left:298px;top:385px;font-size:13.5px;line-height:13.5px;color:#000000;">19.1 MiB of 128.0 MiB used</div>
<div style="left:525px;top:382px;width:1px;height:21px;background:#808080;"></div>
<div style="left:526px;top:382px;width:1px;height:21px;background:#ffffff;"></div>
<div style="left:529px;top:385px;font-size:13.5px;line-height:13.5px;color:#000000;">85% free</div>
<div style="left:694px;top:83px;width:649px;height:323px;background:#d4d0c8;"></div>
<div style="left:694px;top:83px;width:649px;height:1px;background:#000;"></div>
<div style="left:694px;top:83px;width:1px;height:323px;background:#000;"></div>
<div style="left:1342px;top:83px;width:1px;height:323px;background:#000;"></div>
<div style="left:694px;top:405px;width:649px;height:1px;background:#000;"></div>
<div style="left:695px;top:84px;width:647px;height:1px;background:#e8e6e0;"></div>
<div style="left:695px;top:84px;width:1px;height:321px;background:#e8e6e0;"></div>
<div style="left:696px;top:109px;width:1px;height:296px;background:#f4f4f0;"></div>
<div style="left:695px;top:403px;width:647px;height:1px;background:#e8e6e0;"></div>
<div style="left:1340px;top:109px;width:1px;height:295px;background:#e8e6e0;"></div>
<div style="left:696px;top:85px;width:646px;height:24px;background:#aaa69f;"></div>
<div style="left:700px;top:92px;font-size:13.5px;line-height:13.5px;color:#f4f4f4;">Wireless Tables</div>
<div style="left:1340px;top:84px;width:2px;height:321px;background:#c8c4bc;"></div>
<div style="left:697px;top:136px;width:644px;height:1px;background:#ffffff;"></div>
<div style="left:770px;top:114px;width:92px;height:22px;background:#c0bcb4;"></div>
<div style="left:770px;top:113px;width:92px;height:1px;background:#e4e2dc;"></div>
<div style="left:770px;top:113px;width:1px;height:23px;background:#ecebe6;"></div>
<div style="left:861px;top:114px;width:1px;height:22px;background:#a8a49c;"></div>
<div style="left:775px;top:119px;font-size:13.5px;line-height:13.5px;color:#000000;">Nstreme Dual</div>
<div style="left:862px;top:114px;width:81px;height:22px;background:#c0bcb4;"></div>
<div style="left:862px;top:113px;width:81px;height:1px;background:#e4e2dc;"></div>
<div style="left:862px;top:113px;width:1px;height:23px;background:#ecebe6;"></div>
<div style="left:942px;top:114px;width:1px;height:22px;background:#a8a49c;"></div>
<div style="left:867px;top:119px;font-size:13.5px;line-height:13.5px;color:#000000;">Access List</div>
<div style="left:943px;top:114px;width:84px;height:22px;background:#c0bcb4;"></div>
<div style="left:943px;top:113px;width:84px;height:1px;background:#e4e2dc;"></div>
<div style="left:943px;top:113px;width:1px;height:23px;background:#ecebe6;"></div>
<div style="left:1026px;top:114px;width:1px;height:22px;background:#a8a49c;"></div>
<div style="left:948px;top:119px;font-size:13.5px;line-height:13.5px;color:#000000;">Registration</div>
<div style="left:1026px;top:114px;width:84px;height:22px;background:#c0bcb4;"></div>
<div style="left:1026px;top:113px;width:84px;height:1px;background:#e4e2dc;"></div>
<div style="left:1026px;top:113px;width:1px;height:23px;background:#ecebe6;"></div>
<div style="left:1109px;top:114px;width:1px;height:22px;background:#a8a49c;"></div>
<div style="left:1031px;top:119px;font-size:13.5px;line-height:13.5px;color:#000000;">Connect List</div>
<div style="left:1110px;top:114px;width:109px;height:22px;background:#c0bcb4;"></div>
<div style="left:1110px;top:113px;width:109px;height:1px;background:#e4e2dc;"></div>
<div style="left:1110px;top:113px;width:1px;height:23px;background:#ecebe6;"></div>
<div style="left:1218px;top:114px;width:1px;height:22px;background:#a8a49c;"></div>
<div style="left:1115px;top:119px;font-size:13.5px;line-height:13.5px;color:#000000;">Security Profiles</div>
<div style="left:1219px;top:114px;width:67px;height:22px;background:#c0bcb4;"></div>
<div style="left:1219px;top:113px;width:67px;height:1px;background:#e4e2dc;"></div>
<div style="left:1219px;top:113px;width:1px;height:23px;background:#ecebe6;"></div>
<div style="left:1285px;top:114px;width:1px;height:22px;background:#a8a49c;"></div>
<div style="left:1224px;top:119px;font-size:13.5px;line-height:13.5px;color:#000000;">Channels</div>
<div style="left:697px;top:111px;width:73px;height:26px;background:#d4d0c8;"></div>
<div style="left:697px;top:111px;width:73px;height:1px;background:#ffffff;"></div>
<div style="left:697px;top:111px;width:1px;height:26px;background:#ffffff;"></div>
<div style="left:769px;top:111px;width:1px;height:25px;background:#808080;"></div>
<div style="left:704px;top:117px;font-size:13.5px;line-height:13.5px;color:#000000;">Interfaces</div>
<div style="left:698px;top:140px;width:32px;height:24px;background:#d4d0c8;"></div>
<div style="left:698px;top:140px;width:32px;height:1px;background:#808080;"></div>
<div style="left:698px;top:140px;width:1px;height:24px;background:#808080;"></div>
<div style="left:698px;top:163px;width:32px;height:1px;background:#ffffff;"></div>
<div style="left:729px;top:140px;width:1px;height:24px;background:#ffffff;"></div>
<div style="left:699px;top:141px;width:30px;height:1px;background:#ffffff;"></div>
<div style="left:699px;top:141px;width:1px;height:22px;background:#ffffff;"></div>
<div style="left:699px;top:162px;width:30px;height:1px;background:#808080;"></div>
<div style="left:728px;top:141px;width:1px;height:22px;background:#808080;"></div>
<svg style="left:703px;top:146px" width="13" height="13" viewBox="0 0 13 13"><g shape-rendering="crispEdges"><rect x="4" y="0" width="5" height="13" fill="#000040"/><rect x="0" y="4" width="13" height="5" fill="#000040"/><rect x="5" y="1" width="3" height="11" fill="#0808a8"/><rect x="1" y="5" width="11" height="3" fill="#0808a8"/></g></svg>
<svg style="left:718px;top:150px" width="8" height="4" viewBox="0 0 8 4"><path d="M0,0 H8 L4.0,4 Z" fill="#000"/></svg>
<div style="left:732px;top:140px;width:24px;height:24px;background:#d4d0c8;"></div>
<div style="left:732px;top:140px;width:24px;height:1px;background:#808080;"></div>
<div style="left:732px;top:140px;width:1px;height:24px;background:#808080;"></div>
<div style="left:732px;top:163px;width:24px;height:1px;background:#ffffff;"></div>
<div style="left:755px;top:140px;width:1px;height:24px;background:#ffffff;"></div>
<div style="left:733px;top:141px;width:22px;height:1px;background:#ffffff;"></div>
<div style="left:733px;top:141px;width:1px;height:22px;background:#ffffff;"></div>
<div style="left:733px;top:162px;width:22px;height:1px;background:#808080;"></div>
<div style="left:754px;top:141px;width:1px;height:22px;background:#808080;"></div>
<svg style="left:738px;top:150px" width="13" height="5" viewBox="0 0 13 5"><g shape-rendering="crispEdges"><rect x="0.5" y="0.5" width="12" height="4" fill="#f4f4f4" stroke="#8a8a8a"/></g></svg>
<div style="left:764px;top:140px;width:24px;height:24px;background:#d4d0c8;"></div>
<div style="left:764px;top:140px;width:24px;height:1px;background:#808080;"></div>
<div style="left:764px;top:140px;width:1px;height:24px;background:#808080;"></div>
<div style="left:764px;top:163px;width:24px;height:1px;background:#ffffff;"></div>
<div style="left:787px;top:140px;width:1px;height:24px;background:#ffffff;"></div>
<div style="left:765px;top:141px;width:22px;height:1px;background:#ffffff;"></div>
<div style="left:765px;top:141px;width:1px;height:22px;background:#ffffff;"></div>
<div style="left:765px;top:162px;width:22px;height:1px;background:#808080;"></div>
<div style="left:786px;top:141px;width:1px;height:22px;background:#808080;"></div>
<svg style="left:769px;top:146px" width="14" height="12" viewBox="0 0 14 12"><path d="M1.5,6 L5,9.5 L12.5,2" fill="none" stroke="#9a9a9a" stroke-width="3.2" stroke-linejoin="miter"/><path d="M1.5,6 L5,9.5 L12.5,2" fill="none" stroke="#f0f0f0" stroke-width="1.2"/></svg>
<div style="left:790px;top:140px;width:24px;height:24px;background:#d4d0c8;"></div>
<div style="left:790px;top:140px;width:24px;height:1px;background:#808080;"></div>
<div style="left:790px;top:140px;width:1px;height:24px;background:#808080;"></div>
<div style="left:790px;top:163px;width:24px;height:1px;background:#ffffff;"></div>
<div style="left:813px;top:140px;width:1px;height:24px;background:#ffffff;"></div>
<div style="left:791px;top:141px;width:22px;height:1px;background:#ffffff;"></div>
<div style="left:791px;top:141px;width:1px;height:22px;background:#ffffff;"></div>
<div style="left:791px;top:162px;width:22px;height:1px;background:#808080;"></div>
<div style="left:812px;top:141px;width:1px;height:22px;background:#808080;"></div>
<svg style="left:796px;top:146px" width="12" height="12" viewBox="0 0 12 12"><path d="M1.5,1.5 L10.5,10.5 M10.5,1.5 L1.5,10.5" fill="none" stroke="#9a9a9a" stroke-width="3.2"/><path d="M1.5,1.5 L10.5,10.5 M10.5,1.5 L1.5,10.5" fill="none" stroke="#f0f0f0" stroke-width="1.2"/></svg>
<div style="left:822px;top:140px;width:24px;height:24px;background:#d4d0c8;"></div>
<div style="left:822px;top:140px;width:24px;height:1px;background:#808080;"></div>
<div style="left:822px;top:140px;width:1px;height:24px;background:#808080;"></div>
<div style="left:822px;top:163px;width:24px;height:1px;background:#ffffff;"></div>
<div style="left:845px;top:140px;width:1px;height:24px;background:#ffffff;"></div>
<div style="left:823px;top:141px;width:22px;height:1px;background:#ffffff;"></div>
<div style="left:823px;top:141px;width:1px;height:22px;background:#ffffff;"></div>
<div style="left:823px;top:162px;width:22px;height:1px;background:#808080;"></div>
<div style="left:844px;top:141px;width:1px;height:22px;background:#808080;"></div>
<svg style="left:827px;top:147px" width="14" height="11" viewBox="0 0 14 11"><path d="M3.5,0.5 H13.5 V10.5 H0.5 V3.5 Z" fill="#f2f2f2" stroke="#7a7a7a"/><path d="M0.5,3.5 H3.5 V0.5" fill="none" stroke="#7a7a7a"/><path d="M6,3.5 H11 M6,5.5 H11" stroke="#8a8a8a" stroke-width="1"/></svg>
<div style="left:854px;top:140px;width:24px;height:24px;background:#d4d0c8;"></div>
<div style="left:854px;top:140px;width:24px;height:1px;background:#808080;"></div>
<div style="left:854px;top:140px;width:1px;height:24px;background:#808080;"></div>
<div style="left:854px;top:163px;width:24px;height:1px;background:#ffffff;"></div>
<div style="left:877px;top:140px;width:1px;height:24px;background:#ffffff;"></div>
<div style="left:855px;top:141px;width:22px;height:1px;background:#ffffff;"></div>
<div style="left:855px;top:141px;width:1px;height:22px;background:#ffffff;"></div>
<div style="left:855px;top:162px;width:22px;height:1px;background:#808080;"></div>
<div style="left:876px;top:141px;width:1px;height:22px;background:#808080;"></div>
<svg style="left:860px;top:146px" width="12" height="14" viewBox="0 0 12 14"><defs><linearGradient id="fg" x1="0" x2="1"><stop offset="0" stop-color="#c8d0e8"/><stop offset="1" stop-color="#6878a0"/></linearGradient></defs><path d="M0.8,0.8 H11.2 V2.5 L7.5,7 V13 H4.5 V7 L0.8,2.5 Z" fill="url(#fg)" stroke="#101828" stroke-width="1.5" stroke-linejoin="round"/></svg>
<div style="left:886px;top:140px;width:60px;height:24px;background:#d4d0c8;"></div>
<div style="left:886px;top:140px;width:60px;height:1px;background:#808080;"></div>
<div style="left:886px;top:140px;width:1px;height:24px;background:#808080;"></div>
<div style="left:886px;top:163px;width:60px;height:1px;background:#ffffff;"></div>
<div style="left:945px;top:140px;width:1px;height:24px;background:#ffffff;"></div>
<div style="left:887px;top:141px;width:58px;height:1px;background:#ffffff;"></div>
<div style="left:887px;top:141px;width:1px;height:22px;background:#ffffff;"></div>
<div style="left:887px;top:162px;width:58px;height:1px;background:#808080;"></div>
<div style="left:944px;top:141px;width:1px;height:22px;background:#808080;"></div>
<div style="left:716.0px;top:146px;width:400px;text-align:center;font-size:13.5px;line-height:13.5px;color:#000;">CAP</div>
<div style="left:948px;top:140px;width:69px;height:24px;background:#d4d0c8;"></div>
<div style="left:948px;top:140px;width:69px;height:1px;background:#808080;"></div>
<div style="left:948px;top:140px;width:1px;height:24px;background:#808080;"></div>
<div style="left:948px;top:163px;width:69px;height:1px;background:#ffffff;"></div>
<div style="left:1016px;top:140px;width:1px;height:24px;background:#ffffff;"></div>
<div style="left:949px;top:141px;width:67px;height:1px;background:#ffffff;"></div>
<div style="left:949px;top:141px;width:1px;height:22px;background:#ffffff;"></div>
<div style="left:949px;top:162px;width:67px;height:1px;background:#808080;"></div>
<div style="left:1015px;top:141px;width:1px;height:22px;background:#808080;"></div>
<div style="left:782.5px;top:146px;width:400px;text-align:center;font-size:13.5px;line-height:13.5px;color:#000;">Scanner</div>
<div style="left:1020px;top:140px;width:95px;height:24px;background:#d4d0c8;"></div>
<div style="left:1020px;top:140px;width:95px;height:1px;background:#808080;"></div>
<div style="left:1020px;top:140px;width:1px;height:24px;background:#808080;"></div>
<div style="left:1020px;top:163px;width:95px;height:1px;background:#ffffff;"></div>
<div style="left:1114px;top:140px;width:1px;height:24px;background:#ffffff;"></div>
<div style="left:1021px;top:141px;width:93px;height:1px;background:#ffffff;"></div>
<div style="left:1021px;top:141px;width:1px;height:22px;background:#ffffff;"></div>
<div style="left:1021px;top:162px;width:93px;height:1px;background:#808080;"></div>
<div style="left:1113px;top:141px;width:1px;height:22px;background:#808080;"></div>
<div style="left:867.5px;top:146px;width:400px;text-align:center;font-size:13.5px;line-height:13.5px;color:#000;">Freq. Usage</div>
<div style="left:1117px;top:140px;width:78px;height:24px;background:#d4d0c8;"></div>
<div style="left:1117px;top:140px;width:78px;height:1px;background:#808080;"></div>
<div style="left:1117px;top:140px;width:1px;height:24px;background:#808080;"></div>
<div style="left:1117px;top:163px;width:78px;height:1px;background:#ffffff;"></div>
<div style="left:1194px;top:140px;width:1px;height:24px;background:#ffffff;"></div>
<div style="left:1118px;top:141px;width:76px;height:1px;background:#ffffff;"></div>
<div style="left:1118px;top:141px;width:1px;height:22px;background:#ffffff;"></div>
<div style="left:1118px;top:162px;width:76px;height:1px;background:#808080;"></div>
<div style="left:1193px;top:141px;width:1px;height:22px;background:#808080;"></div>
<div style="left:956.0px;top:146px;width:400px;text-align:center;font-size:13.5px;line-height:13.5px;color:#000;">Alignment</div>
<div style="left:1198px;top:140px;width:113px;height:24px;background:#d4d0c8;"></div>
<div style="left:1198px;top:140px;width:113px;height:1px;background:#808080;"></div>
<div style="left:1198px;top:140px;width:1px;height:24px;background:#808080;"></div>
<div style="left:1198px;top:163px;width:113px;height:1px;background:#ffffff;"></div>
<div style="left:1310px;top:140px;width:1px;height:24px;background:#ffffff;"></div>
<div style="left:1199px;top:141px;width:111px;height:1px;background:#ffffff;"></div>
<div style="left:1199px;top:141px;width:1px;height:22px;background:#ffffff;"></div>
<div style="left:1199px;top:162px;width:111px;height:1px;background:#808080;"></div>
<div style="left:1309px;top:141px;width:1px;height:22px;background:#808080;"></div>
<div style="left:1054.5px;top:146px;width:400px;text-align:center;font-size:13.5px;line-height:13.5px;color:#000;">Wireless Sniffer</div>
<div style="left:1313px;top:140px;width:58px;height:24px;background:#d4d0c8;"></div>
<div style="left:1313px;top:140px;width:58px;height:1px;background:#808080;"></div>
<div style="left:1313px;top:140px;width:1px;height:24px;background:#808080;"></div>
<div style="left:1313px;top:163px;width:58px;height:1px;background:#ffffff;"></div>
<div style="left:1370px;top:140px;width:1px;height:24px;background:#ffffff;"></div>
<div style="left:1314px;top:141px;width:56px;height:1px;background:#ffffff;"></div>
<div style="left:1314px;top:141px;width:1px;height:22px;background:#ffffff;"></div>
<div style="left:1314px;top:162px;width:56px;height:1px;background:#808080;"></div>
<div style="left:1369px;top:141px;width:1px;height:22px;background:#808080;"></div>
<div style="left:1322px;top:146px;font-size:13.5px;line-height:13.5px;color:#000000;">Wireless...</div>
<div style="left:698px;top:166px;width:643px;height:199px;background:#ffffff;"></div>
<div style="left:698px;top:166px;width:643px;height:1px;background:#808080;"></div>
<div style="left:698px;top:166px;width:1px;height:199px;background:#808080;"></div>
<div style="left:699px;top:167px;width:642px;height:16px;background:#d4d0c8;"></div>
<div style="left:699px;top:183px;width:642px;height:1px;background:#808080;"></div>
<div style="left:699px;top:167px;width:27px;height:1px;background:#ffffff;"></div>
<div style="left:699px;top:167px;width:1px;height:16px;background:#ffffff;"></div>
<div style="left:726px;top:167px;width:1px;height:16px;background:#808080;"></div>
<div style="left:727px;top:167px;width:99px;height:1px;background:#ffffff;"></div>
<div style="left:727px;top:167px;width:1px;height:16px;background:#ffffff;"></div>
<div style="left:826px;top:167px;width:1px;height:16px;background:#808080;"></div>
<div style="left:730px;top:169px;font-size:13.5px;line-height:13.5px;color:#000000;width:95px;overflow:hidden;white-space:nowrap;">Name</div>
<svg style="left:814px;top:171px" width="10" height="9" viewBox="0 0 10 9"><path d="M4.5,0.5 L8.5,8 H0.5 Z" fill="#ffffff" stroke="#a8a8a8"/></svg>
<div style="left:827px;top:167px;width:119px;height:1px;background:#ffffff;"></div>
<div style="left:827px;top:167px;width:1px;height:16px;background:#ffffff;"></div>
<div style="left:946px;top:167px;width:1px;height:16px;background:#808080;"></div>
<div style="left:830px;top:169px;font-size:13.5px;line-height:13.5px;color:#000000;width:115px;overflow:hidden;white-space:nowrap;">Type</div>
<div style="left:947px;top:167px;width:49px;height:1px;background:#ffffff;"></div>
<div style="left:947px;top:167px;width:1px;height:16px;background:#ffffff;"></div>
<div style="left:996px;top:167px;width:1px;height:16px;background:#808080;"></div>
<div style="left:950px;top:169px;font-size:13.5px;line-height:13.5px;color:#000000;width:45px;overflow:hidden;white-space:nowrap;">L2 MT...</div>
<div style="left:997px;top:167px;width:119px;height:1px;background:#ffffff;"></div>
<div style="left:997px;top:167px;width:1px;height:16px;background:#ffffff;"></div>
<div style="left:1116px;top:167px;width:1px;height:16px;background:#808080;"></div>
<div style="left:1000px;top:169px;font-size:13.5px;line-height:13.5px;color:#000000;width:115px;overflow:hidden;white-space:nowrap;">Tx</div>
<div style="left:1117px;top:167px;width:119px;height:1px;background:#ffffff;"></div>
<div style="left:1117px;top:167px;width:1px;height:16px;background:#ffffff;"></div>
<div style="left:1236px;top:167px;width:1px;height:16px;background:#808080;"></div>
<div style="left:1120px;top:169px;font-size:13.5px;line-height:13.5px;color:#000000;width:115px;overflow:hidden;white-space:nowrap;">Rx</div>
<div style="left:1237px;top:167px;width:100px;height:1px;background:#ffffff;"></div>
<div style="left:1237px;top:167px;width:1px;height:16px;background:#ffffff;"></div>
<div style="left:1337px;top:167px;width:1px;height:16px;background:#808080;"></div>
<div style="left:1240px;top:169px;font-size:13.5px;line-height:13.5px;color:#000000;width:96px;overflow:hidden;white-space:nowrap;">Tx Packet (p/s)</div>
<div style="left:1338px;top:167px;width:3px;height:1px;background:#ffffff;"></div>
<div style="left:1338px;top:167px;width:1px;height:16px;background:#ffffff;"></div>
<div style="left:702px;top:185.5px;font-size:13.5px;line-height:13.5px;color:#000000;width:23px;overflow:hidden;white-space:nowrap;height:14px;line-height:13.5px;">RS</div>
<svg style="left:730px;top:185px" width="14" height="12" viewBox="0 0 14 12"><path d="M0.5,6 L5,1.5 V10.5 Z M13.5,6 L9,1.5 V10.5 Z" fill="#40c8c8" stroke="#105050"/><path d="M5,6 H9" stroke="#105050" stroke-width="1.5"/></svg>
<div style="left:746px;top:185.5px;font-size:13.5px;line-height:13.5px;color:#000000;width:79px;overflow:hidden;white-space:nowrap;height:14px;line-height:13.5px;">wlan1</div>
<div style="left:830px;top:185.5px;font-size:13.5px;line-height:13.5px;color:#000000;width:115px;overflow:hidden;white-space:nowrap;height:14px;line-height:13.5px;">Wireless (Atheros...</div>
<div style="left:693px;top:185.5px;width:300px;text-align:right;font-size:13.5px;line-height:13.5px;color:#000000;letter-spacing:-0.45px;">1600</div>
<div style="left:813px;top:185.5px;width:300px;text-align:right;font-size:13.5px;line-height:13.5px;color:#000000;">11.7 kbps</div>
<div style="left:933px;top:185.5px;width:300px;text-align:right;font-size:13.5px;line-height:13.5px;color:#000000;letter-spacing:-0.45px;">864 bps</div>
<div style="left:1034px;top:185.5px;width:300px;text-align:right;font-size:13.5px;line-height:13.5px;color:#000000;letter-spacing:-0.45px;">17</div>
<div style="left:726px;top:184px;width:1px;height:14px;background:#d8d8d8;"></div>
<div style="left:826px;top:184px;width:1px;height:14px;background:#d8d8d8;"></div>
<div style="left:946px;top:184px;width:1px;height:14px;background:#d8d8d8;"></div>
<div style="left:996px;top:184px;width:1px;height:14px;background:#d8d8d8;"></div>
<div style="left:1116px;top:184px;width:1px;height:14px;background:#d8d8d8;"></div>
<div style="left:1236px;top:184px;width:1px;height:14px;background:#d8d8d8;"></div>
<div style="left:1337px;top:184px;width:1px;height:14px;background:#d8d8d8;"></div>
<div style="left:699px;top:198px;width:642px;height:1px;background:#d8d8d8;"></div>
<div style="left:699px;top:364px;width:642px;height:17px;background:#bcb8b0;"></div>
<div style="left:699px;top:364px;width:642px;height:1px;background:#808080;"></div>
<div style="left:699px;top:380px;width:642px;height:1px;background:#808080;"></div>
<div style="left:699px;top:365px;width:15px;height:15px;background:#d4d0c8;"></div>
<div style="left:699px;top:365px;width:15px;height:1px;background:#ffffff;"></div>
<div style="left:699px;top:365px;width:1px;height:15px;background:#ffffff;"></div>
<div style="left:713px;top:365px;width:1px;height:15px;background:#808080;"></div>
<svg style="left:702px;top:368px" width="8" height="10" viewBox="0 0 8 10"><path d="M0.5,5 L4.5,0.5 V3.5 H7.5 V6.5 H4.5 V9.5 Z" fill="#000"/></svg>
<div style="left:714px;top:365px;width:391px;height:15px;background:#d4d0c8;"></div>
<div style="left:714px;top:365px;width:390px;height:1px;background:#ffffff;"></div>
<div style="left:714px;top:365px;width:1px;height:15px;background:#ffffff;"></div>
<div style="left:1104px;top:365px;width:1px;height:15px;background:#808080;"></div>
<div style="left:698px;top:381px;width:643px;height:1px;background:#e8e6e0;"></div>
<div style="left:698px;top:365px;width:1px;height:38px;background:#808080;"></div>
<div style="left:701px;top:385px;font-size:13.5px;line-height:13.5px;color:#000000;">1 item out of 7</div>
<div style="left:1341px;top:84px;width:1px;height:321px;background:#c8c4bc;"></div>
<div style="left:146px;top:405px;width:633px;height:295px;background:#d4d0c8;"></div>
<div style="left:146px;top:405px;width:633px;height:1px;background:#000;"></div>
<div style="left:146px;top:405px;width:1px;height:295px;background:#000;"></div>
<div style="left:778px;top:405px;width:1px;height:295px;background:#000;"></div>
<div style="left:146px;top:699px;width:633px;height:1px;background:#000;"></div>
<div style="left:147px;top:406px;width:631px;height:1px;background:#e8e6e0;"></div>
<div style="left:147px;top:406px;width:1px;height:293px;background:#e8e6e0;"></div>
<div style="left:148px;top:431px;width:1px;height:268px;background:#f4f4f0;"></div>
<div style="left:149px;top:696px;width:629px;height:1px;background:#808080;"></div>
<div style="left:147px;top:697px;width:631px;height:1px;background:#e8e6e0;"></div>
<div style="left:775px;top:431px;width:1px;height:266px;background:#808080;"></div>
<div style="left:776px;top:431px;width:1px;height:267px;background:#e8e6e0;"></div>
<div style="left:148px;top:407px;width:630px;height:24px;background:#aaa69f;"></div>
<div style="left:152px;top:414px;font-size:13.5px;line-height:13.5px;color:#f4f4f4;">Bridge</div>
<div style="left:743px;top:411px;width:15px;height:15px;background:#dcdad6;"></div>
<div style="left:743px;top:411px;width:15px;height:15px;border:1px solid #282420;box-sizing:border-box;"></div>
<div style="left:744px;top:412px;width:13px;height:1px;background:#fff;"></div>
<div style="left:744px;top:412px;width:1px;height:13px;background:#fff;"></div>
<div style="left:746px;top:414px;width:9px;height:9px;border:1px solid #222;border-top-width:2px;box-sizing:border-box;"></div>
<div style="left:760px;top:411px;width:15px;height:15px;background:#dcdad6;"></div>
<div style="left:760px;top:411px;width:15px;height:15px;border:1px solid #282420;box-sizing:border-box;"></div>
<div style="left:761px;top:412px;width:13px;height:1px;background:#fff;"></div>
<div style="left:761px;top:412px;width:1px;height:13px;background:#fff;"></div>
<svg style="left:763px;top:414px" width="9" height="9" viewBox="0 0 9 9"><path d="M1.2,1.2 L7.8,7.8 M7.8,1.2 L1.2,7.8" stroke="#1a1a1a" stroke-width="2.2"/></svg>
<div style="left:149px;top:458px;width:627px;height:1px;background:#ffffff;"></div>
<div style="left:151px;top:436px;width:50px;height:22px;background:#c0bcb4;"></div>
<div style="left:151px;top:435px;width:50px;height:1px;background:#e4e2dc;"></div>
<div style="left:151px;top:435px;width:1px;height:23px;background:#ecebe6;"></div>
<div style="left:200px;top:436px;width:1px;height:22px;background:#a8a49c;"></div>
<div style="left:156px;top:441px;font-size:13.5px;line-height:13.5px;color:#000000;">Bridge</div>
<div style="left:247px;top:436px;width:46px;height:22px;background:#c0bcb4;"></div>
<div style="left:247px;top:435px;width:46px;height:1px;background:#e4e2dc;"></div>
<div style="left:247px;top:435px;width:1px;height:23px;background:#ecebe6;"></div>
<div style="left:292px;top:436px;width:1px;height:22px;background:#a8a49c;"></div>
<div style="left:252px;top:441px;font-size:13.5px;line-height:13.5px;color:#000000;">Filters</div>
<div style="left:293px;top:436px;width:41px;height:22px;background:#c0bcb4;"></div>
<div style="left:293px;top:435px;width:41px;height:1px;background:#e4e2dc;"></div>
<div style="left:293px;top:435px;width:1px;height:23px;background:#ecebe6;"></div>
<div style="left:333px;top:436px;width:1px;height:22px;background:#a8a49c;"></div>
<div style="left:298px;top:441px;font-size:13.5px;line-height:13.5px;color:#000000;">NAT</div>
<div style="left:334px;top:436px;width:46px;height:22px;background:#c0bcb4;"></div>
<div style="left:334px;top:435px;width:46px;height:1px;background:#e4e2dc;"></div>
<div style="left:334px;top:435px;width:1px;height:23px;background:#ecebe6;"></div>
<div style="left:379px;top:436px;width:1px;height:22px;background:#a8a49c;"></div>
<div style="left:339px;top:441px;font-size:13.5px;line-height:13.5px;color:#000000;">Hosts</div>
<div style="left:200px;top:433px;width:47px;height:26px;background:#d4d0c8;"></div>
<div style="left:200px;top:433px;width:47px;height:1px;background:#ffffff;"></div>
<div style="left:200px;top:433px;width:1px;height:26px;background:#ffffff;"></div>
<div style="left:246px;top:433px;width:1px;height:25px;background:#808080;"></div>
<div style="left:207px;top:439px;font-size:13.5px;line-height:13.5px;color:#000000;">Ports</div>
<div style="left:777px;top:431px;width:1px;height:266px;background:#e8e6e0;"></div>
<div style="left:150px;top:462px;width:24px;height:24px;background:#d4d0c8;"></div>
<div style="left:150px;top:462px;width:24px;height:1px;background:#808080;"></div>
<div style="left:150px;top:462px;width:1px;height:24px;background:#808080;"></div>
<div style="left:150px;top:485px;width:24px;height:1px;background:#ffffff;"></div>
<div style="left:173px;top:462px;width:1px;height:24px;background:#ffffff;"></div>
<div style="left:151px;top:463px;width:22px;height:1px;background:#ffffff;"></div>
<div style="left:151px;top:463px;width:1px;height:22px;background:#ffffff;"></div>
<div style="left:151px;top:484px;width:22px;height:1px;background:#808080;"></div>
<div style="left:172px;top:463px;width:1px;height:22px;background:#808080;"></div>
<svg style="left:156px;top:468px" width="13" height="13" viewBox="0 0 13 13"><g shape-rendering="crispEdges"><rect x="4" y="0" width="5" height="13" fill="#000040"/><rect x="0" y="4" width="13" height="5" fill="#000040"/><rect x="5" y="1" width="3" height="11" fill="#0808a8"/><rect x="1" y="5" width="11" height="3" fill="#0808a8"/></g></svg>
<div style="left:176px;top:462px;width:24px;height:24px;background:#d4d0c8;"></div>
<div style="left:176px;top:462px;width:24px;height:1px;background:#808080;"></div>
<div style="left:176px;top:462px;width:1px;height:24px;background:#808080;"></div>
<div style="left:176px;top:485px;width:24px;height:1px;background:#ffffff;"></div>
<div style="left:199px;top:462px;width:1px;height:24px;background:#ffffff;"></div>
<div style="left:177px;top:463px;width:22px;height:1px;background:#ffffff;"></div>
<div style="left:177px;top:463px;width:1px;height:22px;background:#ffffff;"></div>
<div style="left:177px;top:484px;width:22px;height:1px;background:#808080;"></div>
<div style="left:198px;top:463px;width:1px;height:22px;background:#808080;"></div>
<svg style="left:182px;top:472px" width="13" height="5" viewBox="0 0 13 5"><g shape-rendering="crispEdges"><rect x="0.5" y="0.5" width="12" height="4" fill="#f4f4f4" stroke="#8a8a8a"/></g></svg>
<div style="left:208px;top:462px;width:24px;height:24px;background:#d4d0c8;"></div>
<div style="left:208px;top:462px;width:24px;height:1px;background:#808080;"></div>
<div style="left:208px;top:462px;width:1px;height:24px;background:#808080;"></div>
<div style="left:208px;top:485px;width:24px;height:1px;background:#ffffff;"></div>
<div style="left:231px;top:462px;width:1px;height:24px;background:#ffffff;"></div>
<div style="left:209px;top:463px;width:22px;height:1px;background:#ffffff;"></div>
<div style="left:209px;top:463px;width:1px;height:22px;background:#ffffff;"></div>
<div style="left:209px;top:484px;width:22px;height:1px;background:#808080;"></div>
<div style="left:230px;top:463px;width:1px;height:22px;background:#808080;"></div>
<svg style="left:213px;top:468px" width="14" height="12" viewBox="0 0 14 12"><path d="M1.5,6 L5,9.5 L12.5,2" fill="none" stroke="#9a9a9a" stroke-width="3.2" stroke-linejoin="miter"/><path d="M1.5,6 L5,9.5 L12.5,2" fill="none" stroke="#f0f0f0" stroke-width="1.2"/></svg>
<div style="left:234px;top:462px;width:24px;height:24px;background:#d4d0c8;"></div>
<div style="left:234px;top:462px;width:24px;height:1px;background:#808080;"></div>
<div style="left:234px;top:462px;width:1px;height:24px;background:#808080;"></div>
<div style="left:234px;top:485px;width:24px;height:1px;background:#ffffff;"></div>
<div style="left:257px;top:462px;width:1px;height:24px;background:#ffffff;"></div>
<div style="left:235px;top:463px;width:22px;height:1px;background:#ffffff;"></div>
<div style="left:235px;top:463px;width:1px;height:22px;background:#ffffff;"></div>
<div style="left:235px;top:484px;width:22px;height:1px;background:#808080;"></div>
<div style="left:256px;top:463px;width:1px;height:22px;background:#808080;"></div>
<svg style="left:240px;top:468px" width="12" height="12" viewBox="0 0 12 12"><path d="M1.5,1.5 L10.5,10.5 M10.5,1.5 L1.5,10.5" fill="none" stroke="#9a9a9a" stroke-width="3.2"/><path d="M1.5,1.5 L10.5,10.5 M10.5,1.5 L1.5,10.5" fill="none" stroke="#f0f0f0" stroke-width="1.2"/></svg>
<div style="left:266px;top:462px;width:24px;height:24px;background:#d4d0c8;"></div>
<div style="left:266px;top:462px;width:24px;height:1px;background:#808080;"></div>
<div style="left:266px;top:462px;width:1px;height:24px;background:#808080;"></div>
<div style="left:266px;top:485px;width:24px;height:1px;background:#ffffff;"></div>
<div style="left:289px;top:462px;width:1px;height:24px;background:#ffffff;"></div>
<div style="left:267px;top:463px;width:22px;height:1px;background:#ffffff;"></div>
<div style="left:267px;top:463px;width:1px;height:22px;background:#ffffff;"></div>
<div style="left:267px;top:484px;width:22px;height:1px;background:#808080;"></div>
<div style="left:288px;top:463px;width:1px;height:22px;background:#808080;"></div>
<svg style="left:271px;top:469px" width="14" height="11" viewBox="0 0 14 11"><path d="M3.5,0.5 H13.5 V10.5 H0.5 V3.5 Z" fill="#f2f2f2" stroke="#7a7a7a"/><path d="M0.5,3.5 H3.5 V0.5" fill="none" stroke="#7a7a7a"/><path d="M6,3.5 H11 M6,5.5 H11" stroke="#8a8a8a" stroke-width="1"/></svg>
<div style="left:298px;top:462px;width:24px;height:24px;background:#d4d0c8;"></div>
<div style="left:298px;top:462px;width:24px;height:1px;background:#808080;"></div>
<div style="left:298px;top:462px;width:1px;height:24px;background:#808080;"></div>
<div style="left:298px;top:485px;width:24px;height:1px;background:#ffffff;"></div>
<div style="left:321px;top:462px;width:1px;height:24px;background:#ffffff;"></div>
<div style="left:299px;top:463px;width:22px;height:1px;background:#ffffff;"></div>
<div style="left:299px;top:463px;width:1px;height:22px;background:#ffffff;"></div>
<div style="left:299px;top:484px;width:22px;height:1px;background:#808080;"></div>
<div style="left:320px;top:463px;width:1px;height:22px;background:#808080;"></div>
<svg style="left:304px;top:468px" width="12" height="14" viewBox="0 0 12 14"><defs><linearGradient id="fg" x1="0" x2="1"><stop offset="0" stop-color="#c8d0e8"/><stop offset="1" stop-color="#6878a0"/></linearGradient></defs><path d="M0.8,0.8 H11.2 V2.5 L7.5,7 V13 H4.5 V7 L0.8,2.5 Z" fill="url(#fg)" stroke="#101828" stroke-width="1.5" stroke-linejoin="round"/></svg>
<div style="left:704px;top:464px;width:69px;height:21px;background:#ffffff;"></div>
<div style="left:704px;top:464px;width:69px;height:1px;background:#808080;"></div>
<div style="left:704px;top:464px;width:1px;height:21px;background:#808080;"></div>
<div style="left:704px;top:484px;width:69px;height:1px;background:#808080;"></div>
<div style="left:772px;top:464px;width:1px;height:21px;background:#808080;"></div>
<div style="left:703px;top:485px;width:71px;height:1px;background:#ffffff;"></div>
<div style="left:773px;top:463px;width:1px;height:23px;background:#ffffff;"></div>
<div style="left:710px;top:468px;font-size:12.5px;line-height:12.5px;color:#8c8c8c;font-style:italic;">Find</div>
<div style="left:150px;top:488px;width:624px;height:184px;background:#ffffff;"></div>
<div style="left:150px;top:488px;width:624px;height:1px;background:#808080;"></div>
<div style="left:150px;top:488px;width:1px;height:184px;background:#808080;"></div>
<div style="left:151px;top:489px;width:623px;height:16px;background:#d4d0c8;"></div>
<div style="left:151px;top:505px;width:623px;height:1px;background:#808080;"></div>
<div style="left:151px;top:489px;width:21px;height:1px;background:#ffffff;"></div>
<div style="left:151px;top:489px;width:1px;height:16px;background:#ffffff;"></div>
<div style="left:172px;top:489px;width:1px;height:16px;background:#808080;"></div>
<div style="left:173px;top:489px;width:99px;height:1px;background:#ffffff;"></div>
<div style="left:173px;top:489px;width:1px;height:16px;background:#ffffff;"></div>
<div style="left:272px;top:489px;width:1px;height:16px;background:#808080;"></div>
<div style="left:176px;top:491px;font-size:13.5px;line-height:13.5px;color:#000000;width:95px;overflow:hidden;white-space:nowrap;">Interface</div>
<svg style="left:260px;top:493px" width="10" height="9" viewBox="0 0 10 9"><path d="M4.5,0.5 L8.5,8 H0.5 Z" fill="#ffffff" stroke="#a8a8a8"/></svg>
<div style="left:273px;top:489px;width:99px;height:1px;background:#ffffff;"></div>
<div style="left:273px;top:489px;width:1px;height:16px;background:#ffffff;"></div>
<div style="left:372px;top:489px;width:1px;height:16px;background:#808080;"></div>
<div style="left:276px;top:491px;font-size:13.5px;line-height:13.5px;color:#000000;width:95px;overflow:hidden;white-space:nowrap;">Bridge</div>
<div style="left:373px;top:489px;width:59px;height:1px;background:#ffffff;"></div>
<div style="left:373px;top:489px;width:1px;height:16px;background:#ffffff;"></div>
<div style="left:432px;top:489px;width:1px;height:16px;background:#808080;"></div>
<div style="left:376px;top:491px;font-size:13.5px;line-height:13.5px;color:#000000;width:55px;overflow:hidden;white-space:nowrap;">Priority ...</div>
<div style="left:433px;top:489px;width:59px;height:1px;background:#ffffff;"></div>
<div style="left:433px;top:489px;width:1px;height:16px;background:#ffffff;"></div>
<div style="left:492px;top:489px;width:1px;height:16px;background:#808080;"></div>
<div style="left:436px;top:491px;font-size:13.5px;line-height:13.5px;color:#000000;width:55px;overflow:hidden;white-space:nowrap;">Path Co...</div>
<div style="left:493px;top:489px;width:45px;height:1px;background:#ffffff;"></div>
<div style="left:493px;top:489px;width:1px;height:16px;background:#ffffff;"></div>
<div style="left:538px;top:489px;width:1px;height:16px;background:#808080;"></div>
<div style="left:496px;top:491px;font-size:13.5px;line-height:13.5px;color:#000000;width:41px;overflow:hidden;white-space:nowrap;">Horiz...</div>
<div style="left:539px;top:489px;width:99px;height:1px;background:#ffffff;"></div>
<div style="left:539px;top:489px;width:1px;height:16px;background:#ffffff;"></div>
<div style="left:638px;top:489px;width:1px;height:16px;background:#808080;"></div>
<div style="left:542px;top:491px;font-size:13.5px;line-height:13.5px;color:#000000;width:95px;overflow:hidden;white-space:nowrap;">Role</div>
<div style="left:639px;top:489px;width:59px;height:1px;background:#ffffff;"></div>
<div style="left:639px;top:489px;width:1px;height:16px;background:#ffffff;"></div>
<div style="left:698px;top:489px;width:1px;height:16px;background:#808080;"></div>
<div style="left:642px;top:491px;font-size:13.5px;line-height:13.5px;color:#000000;width:55px;overflow:hidden;white-space:nowrap;">Root P...</div>
<div style="left:699px;top:489px;width:58px;height:1px;background:#ffffff;"></div>
<div style="left:699px;top:489px;width:1px;height:16px;background:#ffffff;"></div>
<div style="left:757px;top:489px;width:1px;height:16px;background:#808080;"></div>
<div style="left:758px;top:489px;width:16px;height:1px;background:#ffffff;"></div>
<div style="left:758px;top:489px;width:1px;height:16px;background:#ffffff;"></div>
<div style="left:758px;top:489px;width:16px;height:16px;background:#d4d0c8;"></div>
<div style="left:758px;top:489px;width:16px;height:1px;background:#ffffff;"></div>
<div style="left:758px;top:489px;width:1px;height:16px;background:#ffffff;"></div>
<div style="left:773px;top:489px;width:1px;height:16px;background:#808080;"></div>
<svg style="left:760px;top:495px" width="11" height="6" viewBox="0 0 11 6"><path d="M0,0 H11 L5.5,6 Z" fill="#000"/></svg>
<svg style="left:176px;top:507px" width="15" height="11" viewBox="0 0 15 11"><g fill="none" stroke="#1a0a0a" stroke-width="1.2"><path d="M3.5,0 V9 M11.5,0 V9 M3.5,4.5 H11.5 M0.5,6.5 L3.5,2.5 M14.5,6.5 L11.5,2.5"/></g><path d="M1,9.2 H14" stroke="#801818" stroke-width="1.6"/></svg>
<div style="left:192px;top:507.5px;font-size:13.5px;line-height:13.5px;color:#000000;width:79px;overflow:hidden;white-space:nowrap;height:14px;line-height:13.5px;">ether3</div>
<div style="left:276px;top:507.5px;font-size:13.5px;line-height:13.5px;color:#000000;width:95px;overflow:hidden;white-space:nowrap;height:14px;line-height:13.5px;">hs-bridge</div>
<div style="left:129px;top:507.5px;width:300px;text-align:right;font-size:13.5px;line-height:13.5px;color:#000000;letter-spacing:-0.45px;">80</div>
<div style="left:189px;top:507.5px;width:300px;text-align:right;font-size:13.5px;line-height:13.5px;color:#000000;letter-spacing:-0.45px;">10</div>
<div style="left:542px;top:507.5px;font-size:13.5px;line-height:13.5px;color:#000000;width:95px;overflow:hidden;white-space:nowrap;height:14px;line-height:13.5px;">designated port</div>
<div style="left:172px;top:506px;width:1px;height:14px;background:#d8d8d8;"></div>
<div style="left:272px;top:506px;width:1px;height:14px;background:#d8d8d8;"></div>
<div style="left:372px;top:506px;width:1px;height:14px;background:#d8d8d8;"></div>
<div style="left:432px;top:506px;width:1px;height:14px;background:#d8d8d8;"></div>
<div style="left:492px;top:506px;width:1px;height:14px;background:#d8d8d8;"></div>
<div style="left:538px;top:506px;width:1px;height:14px;background:#d8d8d8;"></div>
<div style="left:638px;top:506px;width:1px;height:14px;background:#d8d8d8;"></div>
<div style="left:698px;top:506px;width:1px;height:14px;background:#d8d8d8;"></div>
<div style="left:151px;top:520px;width:623px;height:1px;background:#d8d8d8;"></div>
<div style="left:154px;top:522.5px;font-size:13.5px;line-height:13.5px;color:#000000;width:17px;overflow:hidden;white-space:nowrap;height:14px;line-height:13.5px;">I</div>
<svg style="left:176px;top:522px" width="15" height="11" viewBox="0 0 15 11"><g fill="none" stroke="#1a0a0a" stroke-width="1.2"><path d="M3.5,0 V9 M11.5,0 V9 M3.5,4.5 H11.5 M0.5,6.5 L3.5,2.5 M14.5,6.5 L11.5,2.5"/></g><path d="M1,9.2 H14" stroke="#801818" stroke-width="1.6"/></svg>
<div style="left:192px;top:522.5px;font-size:13.5px;line-height:13.5px;color:#000000;font-style:italic;width:79px;overflow:hidden;white-space:nowrap;height:14px;line-height:13.5px;">ether4</div>
<div style="left:276px;top:522.5px;font-size:13.5px;line-height:13.5px;color:#000000;width:95px;overflow:hidden;white-space:nowrap;height:14px;line-height:13.5px;">hs-bridge</div>
<div style="left:129px;top:522.5px;width:300px;text-align:right;font-size:13.5px;line-height:13.5px;color:#000000;letter-spacing:-0.45px;">80</div>
<div style="left:189px;top:522.5px;width:300px;text-align:right;font-size:13.5px;line-height:13.5px;color:#000000;letter-spacing:-0.45px;">10</div>
<div style="left:542px;top:522.5px;font-size:13.5px;line-height:13.5px;color:#000000;width:95px;overflow:hidden;white-space:nowrap;height:14px;line-height:13.5px;">disabled port</div>
<div style="left:172px;top:521px;width:1px;height:14px;background:#d8d8d8;"></div>
<div style="left:272px;top:521px;width:1px;height:14px;background:#d8d8d8;"></div>
<div style="left:372px;top:521px;width:1px;height:14px;background:#d8d8d8;"></div>
<div style="left:432px;top:521px;width:1px;height:14px;background:#d8d8d8;"></div>
<div style="left:492px;top:521px;width:1px;height:14px;background:#d8d8d8;"></div>
<div style="left:538px;top:521px;width:1px;height:14px;background:#d8d8d8;"></div>
<div style="left:638px;top:521px;width:1px;height:14px;background:#d8d8d8;"></div>
<div style="left:698px;top:521px;width:1px;height:14px;background:#d8d8d8;"></div>
<div style="left:151px;top:535px;width:623px;height:1px;background:#d8d8d8;"></div>
<div style="left:154px;top:537.5px;font-size:13.5px;line-height:13.5px;color:#000000;width:17px;overflow:hidden;white-space:nowrap;height:14px;line-height:13.5px;">I</div>
<svg style="left:176px;top:537px" width="15" height="11" viewBox="0 0 15 11"><g fill="none" stroke="#1a0a0a" stroke-width="1.2"><path d="M3.5,0 V9 M11.5,0 V9 M3.5,4.5 H11.5 M0.5,6.5 L3.5,2.5 M14.5,6.5 L11.5,2.5"/></g><path d="M1,9.2 H14" stroke="#801818" stroke-width="1.6"/></svg>
<div style="left:192px;top:537.5px;font-size:13.5px;line-height:13.5px;color:#000000;font-style:italic;width:79px;overflow:hidden;white-space:nowrap;height:14px;line-height:13.5px;">ether5</div>
<div style="left:276px;top:537.5px;font-size:13.5px;line-height:13.5px;color:#000000;width:95px;overflow:hidden;white-space:nowrap;height:14px;line-height:13.5px;">hs-bridge</div>
<div style="left:129px;top:537.5px;width:300px;text-align:right;font-size:13.5px;line-height:13.5px;color:#000000;letter-spacing:-0.45px;">80</div>
<div style="left:189px;top:537.5px;width:300px;text-align:right;font-size:13.5px;line-height:13.5px;color:#000000;letter-spacing:-0.45px;">10</div>
<div style="left:542px;top:537.5px;font-size:13.5px;line-height:13.5px;color:#000000;width:95px;overflow:hidden;white-space:nowrap;height:14px;line-height:13.5px;">disabled port</div>
<div style="left:172px;top:536px;width:1px;height:14px;background:#d8d8d8;"></div>
<div style="left:272px;top:536px;width:1px;height:14px;background:#d8d8d8;"></div>
<div style="left:372px;top:536px;width:1px;height:14px;background:#d8d8d8;"></div>
<div style="left:432px;top:536px;width:1px;height:14px;background:#d8d8d8;"></div>
<div style="left:492px;top:536px;width:1px;height:14px;background:#d8d8d8;"></div>
<div style="left:538px;top:536px;width:1px;height:14px;background:#d8d8d8;"></div>
<div style="left:638px;top:536px;width:1px;height:14px;background:#d8d8d8;"></div>
<div style="left:698px;top:536px;width:1px;height:14px;background:#d8d8d8;"></div>
<div style="left:151px;top:550px;width:623px;height:1px;background:#d8d8d8;"></div>
<svg style="left:176px;top:552px" width="15" height="11" viewBox="0 0 15 11"><g fill="none" stroke="#1a0a0a" stroke-width="1.2"><path d="M3.5,0 V9 M11.5,0 V9 M3.5,4.5 H11.5 M0.5,6.5 L3.5,2.5 M14.5,6.5 L11.5,2.5"/></g><path d="M1,9.2 H14" stroke="#801818" stroke-width="1.6"/></svg>
<div style="left:192px;top:552.5px;font-size:13.5px;line-height:13.5px;color:#000000;width:79px;overflow:hidden;white-space:nowrap;height:14px;line-height:13.5px;">wlan1</div>
<div style="left:276px;top:552.5px;font-size:13.5px;line-height:13.5px;color:#000000;width:95px;overflow:hidden;white-space:nowrap;height:14px;line-height:13.5px;">hs-bridge</div>
<div style="left:129px;top:552.5px;width:300px;text-align:right;font-size:13.5px;line-height:13.5px;color:#000000;letter-spacing:-0.45px;">80</div>
<div style="left:189px;top:552.5px;width:300px;text-align:right;font-size:13.5px;line-height:13.5px;color:#000000;letter-spacing:-0.45px;">10</div>
<div style="left:542px;top:552.5px;font-size:13.5px;line-height:13.5px;color:#000000;width:95px;overflow:hidden;white-space:nowrap;height:14px;line-height:13.5px;">designated port</div>
<div style="left:172px;top:551px;width:1px;height:14px;background:#d8d8d8;"></div>
<div style="left:272px;top:551px;width:1px;height:14px;background:#d8d8d8;"></div>
<div style="left:372px;top:551px;width:1px;height:14px;background:#d8d8d8;"></div>
<div style="left:432px;top:551px;width:1px;height:14px;background:#d8d8d8;"></div>
<div style="left:492px;top:551px;width:1px;height:14px;background:#d8d8d8;"></div>
<div style="left:538px;top:551px;width:1px;height:14px;background:#d8d8d8;"></div>
<div style="left:638px;top:551px;width:1px;height:14px;background:#d8d8d8;"></div>
<div style="left:698px;top:551px;width:1px;height:14px;background:#d8d8d8;"></div>
<div style="left:151px;top:565px;width:623px;height:1px;background:#d8d8d8;"></div>
<div style="left:150px;top:672px;width:624px;height:1px;background:#808080;"></div>
<div style="left:150px;top:673px;width:1px;height:22px;background:#808080;"></div>
<div style="left:153px;top:677px;font-size:13.5px;line-height:13.5px;color:#000000;">4 items</div>
<div style="left:150px;top:694px;width:624px;height:1px;background:#e8e6e0;"></div>
<div style="left:778px;top:405px;width:550px;height:295px;background:#d4d0c8;"></div>
<div style="left:778px;top:405px;width:550px;height:1px;background:#000;"></div>
<div style="left:778px;top:405px;width:1px;height:295px;background:#000;"></div>
<div style="left:1327px;top:405px;width:1px;height:295px;background:#000;"></div>
<div style="left:778px;top:699px;width:550px;height:1px;background:#000;"></div>
<div style="left:779px;top:406px;width:548px;height:1px;background:#e8e6e0;"></div>
<div style="left:779px;top:406px;width:1px;height:293px;background:#e8e6e0;"></div>
<div style="left:780px;top:431px;width:1px;height:268px;background:#f4f4f0;"></div>
<div style="left:781px;top:696px;width:546px;height:1px;background:#808080;"></div>
<div style="left:779px;top:697px;width:548px;height:1px;background:#e8e6e0;"></div>
<div style="left:1324px;top:431px;width:1px;height:266px;background:#808080;"></div>
<div style="left:1325px;top:431px;width:1px;height:267px;background:#e8e6e0;"></div>
<div style="left:780px;top:407px;width:547px;height:24px;background:#aaa69f;"></div>
<div style="left:784px;top:414px;font-size:13.5px;line-height:13.5px;color:#f4f4f4;">Address List</div>
<div style="left:1292px;top:411px;width:14px;height:15px;background:#dcdad6;"></div>
<div style="left:1292px;top:411px;width:14px;height:15px;border:1px solid #282420;box-sizing:border-box;"></div>
<div style="left:1293px;top:412px;width:12px;height:1px;background:#fff;"></div>
<div style="left:1293px;top:412px;width:1px;height:13px;background:#fff;"></div>
<div style="left:1295px;top:414px;width:8px;height:9px;border:1px solid #222;border-top-width:2px;box-sizing:border-box;"></div>
<div style="left:1308px;top:411px;width:15px;height:15px;background:#dcdad6;"></div>
<div style="left:1308px;top:411px;width:15px;height:15px;border:1px solid #282420;box-sizing:border-box;"></div>
<div style="left:1309px;top:412px;width:13px;height:1px;background:#fff;"></div>
<div style="left:1309px;top:412px;width:1px;height:13px;background:#fff;"></div>
<svg style="left:1311px;top:414px" width="9" height="9" viewBox="0 0 9 9"><path d="M1.2,1.2 L7.8,7.8 M7.8,1.2 L1.2,7.8" stroke="#1a1a1a" stroke-width="2.2"/></svg>
<div style="left:781px;top:434px;width:24px;height:24px;background:#d4d0c8;"></div>
<div style="left:781px;top:434px;width:24px;height:1px;background:#808080;"></div>
<div style="left:781px;top:434px;width:1px;height:24px;background:#808080;"></div>
<div style="left:781px;top:457px;width:24px;height:1px;background:#ffffff;"></div>
<div style="left:804px;top:434px;width:1px;height:24px;background:#ffffff;"></div>
<div style="left:782px;top:435px;width:22px;height:1px;background:#ffffff;"></div>
<div style="left:782px;top:435px;width:1px;height:22px;background:#ffffff;"></div>
<div style="left:782px;top:456px;width:22px;height:1px;background:#808080;"></div>
<div style="left:803px;top:435px;width:1px;height:22px;background:#808080;"></div>
<svg style="left:787px;top:440px" width="13" height="13" viewBox="0 0 13 13"><g shape-rendering="crispEdges"><rect x="4" y="0" width="5" height="13" fill="#000040"/><rect x="0" y="4" width="13" height="5" fill="#000040"/><rect x="5" y="1" width="3" height="11" fill="#0808a8"/><rect x="1" y="5" width="11" height="3" fill="#0808a8"/></g></svg>
<div style="left:807px;top:434px;width:24px;height:24px;background:#d4d0c8;"></div>
<div style="left:807px;top:434px;width:24px;height:1px;background:#808080;"></div>
<div style="left:807px;top:434px;width:1px;height:24px;background:#808080;"></div>
<div style="left:807px;top:457px;width:24px;height:1px;background:#ffffff;"></div>
<div style="left:830px;top:434px;width:1px;height:24px;background:#ffffff;"></div>
<div style="left:808px;top:435px;width:22px;height:1px;background:#ffffff;"></div>
<div style="left:808px;top:435px;width:1px;height:22px;background:#ffffff;"></div>
<div style="left:808px;top:456px;width:22px;height:1px;background:#808080;"></div>
<div style="left:829px;top:435px;width:1px;height:22px;background:#808080;"></div>
<svg style="left:813px;top:444px" width="13" height="5" viewBox="0 0 13 5"><g shape-rendering="crispEdges"><rect x="0.5" y="0.5" width="12" height="4" fill="#f4f4f4" stroke="#8a8a8a"/></g></svg>
<div style="left:839px;top:434px;width:24px;height:24px;background:#d4d0c8;"></div>
<div style="left:839px;top:434px;width:24px;height:1px;background:#808080;"></div>
<div style="left:839px;top:434px;width:1px;height:24px;background:#808080;"></div>
<div style="left:839px;top:457px;width:24px;height:1px;background:#ffffff;"></div>
<div style="left:862px;top:434px;width:1px;height:24px;background:#ffffff;"></div>
<div style="left:840px;top:435px;width:22px;height:1px;background:#ffffff;"></div>
<div style="left:840px;top:435px;width:1px;height:22px;background:#ffffff;"></div>
<div style="left:840px;top:456px;width:22px;height:1px;background:#808080;"></div>
<div style="left:861px;top:435px;width:1px;height:22px;background:#808080;"></div>
<svg style="left:844px;top:440px" width="14" height="12" viewBox="0 0 14 12"><path d="M1.5,6 L5,9.5 L12.5,2" fill="none" stroke="#9a9a9a" stroke-width="3.2" stroke-linejoin="miter"/><path d="M1.5,6 L5,9.5 L12.5,2" fill="none" stroke="#f0f0f0" stroke-width="1.2"/></svg>
<div style="left:865px;top:434px;width:24px;height:24px;background:#d4d0c8;"></div>
<div style="left:865px;top:434px;width:24px;height:1px;background:#808080;"></div>
<div style="left:865px;top:434px;width:1px;height:24px;background:#808080;"></div>
<div style="left:865px;top:457px;width:24px;height:1px;background:#ffffff;"></div>
<div style="left:888px;top:434px;width:1px;height:24px;background:#ffffff;"></div>
<div style="left:866px;top:435px;width:22px;height:1px;background:#ffffff;"></div>
<div style="left:866px;top:435px;width:1px;height:22px;background:#ffffff;"></div>
<div style="left:866px;top:456px;width:22px;height:1px;background:#808080;"></div>
<div style="left:887px;top:435px;width:1px;height:22px;background:#808080;"></div>
<svg style="left:871px;top:440px" width="12" height="12" viewBox="0 0 12 12"><path d="M1.5,1.5 L10.5,10.5 M10.5,1.5 L1.5,10.5" fill="none" stroke="#9a9a9a" stroke-width="3.2"/><path d="M1.5,1.5 L10.5,10.5 M10.5,1.5 L1.5,10.5" fill="none" stroke="#f0f0f0" stroke-width="1.2"/></svg>
<div style="left:897px;top:434px;width:24px;height:24px;background:#d4d0c8;"></div>
<div style="left:897px;top:434px;width:24px;height:1px;background:#808080;"></div>
<div style="left:897px;top:434px;width:1px;height:24px;background:#808080;"></div>
<div style="left:897px;top:457px;width:24px;height:1px;background:#ffffff;"></div>
<div style="left:920px;top:434px;width:1px;height:24px;background:#ffffff;"></div>
<div style="left:898px;top:435px;width:22px;height:1px;background:#ffffff;"></div>
<div style="left:898px;top:435px;width:1px;height:22px;background:#ffffff;"></div>
<div style="left:898px;top:456px;width:22px;height:1px;background:#808080;"></div>
<div style="left:919px;top:435px;width:1px;height:22px;background:#808080;"></div>
<svg style="left:902px;top:441px" width="14" height="11" viewBox="0 0 14 11"><path d="M3.5,0.5 H13.5 V10.5 H0.5 V3.5 Z" fill="#f2f2f2" stroke="#7a7a7a"/><path d="M0.5,3.5 H3.5 V0.5" fill="none" stroke="#7a7a7a"/><path d="M6,3.5 H11 M6,5.5 H11" stroke="#8a8a8a" stroke-width="1"/></svg>
<div style="left:929px;top:434px;width:24px;height:24px;background:#d4d0c8;"></div>
<div style="left:929px;top:434px;width:24px;height:1px;background:#808080;"></div>
<div style="left:929px;top:434px;width:1px;height:24px;background:#808080;"></div>
<div style="left:929px;top:457px;width:24px;height:1px;background:#ffffff;"></div>
<div style="left:952px;top:434px;width:1px;height:24px;background:#ffffff;"></div>
<div style="left:930px;top:435px;width:22px;height:1px;background:#ffffff;"></div>
<div style="left:930px;top:435px;width:1px;height:22px;background:#ffffff;"></div>
<div style="left:930px;top:456px;width:22px;height:1px;background:#808080;"></div>
<div style="left:951px;top:435px;width:1px;height:22px;background:#808080;"></div>
<svg style="left:935px;top:440px" width="12" height="14" viewBox="0 0 12 14"><defs><linearGradient id="fg" x1="0" x2="1"><stop offset="0" stop-color="#c8d0e8"/><stop offset="1" stop-color="#6878a0"/></linearGradient></defs><path d="M0.8,0.8 H11.2 V2.5 L7.5,7 V13 H4.5 V7 L0.8,2.5 Z" fill="url(#fg)" stroke="#101828" stroke-width="1.5" stroke-linejoin="round"/></svg>
<div style="left:1252px;top:436px;width:70px;height:21px;background:#ffffff;"></div>
<div style="left:1252px;top:436px;width:70px;height:1px;background:#808080;"></div>
<div style="left:1252px;top:436px;width:1px;height:21px;background:#808080;"></div>
<div style="left:1252px;top:456px;width:70px;height:1px;background:#808080;"></div>
<div style="left:1321px;top:436px;width:1px;height:21px;background:#808080;"></div>
<div style="left:1251px;top:457px;width:72px;height:1px;background:#ffffff;"></div>
<div style="left:1322px;top:435px;width:1px;height:23px;background:#ffffff;"></div>
<div style="left:1258px;top:440px;font-size:12.5px;line-height:12.5px;color:#8c8c8c;font-style:italic;">Find</div>
<div style="left:781px;top:460px;width:542px;height:212px;background:#ffffff;"></div>
<div style="left:781px;top:460px;width:542px;height:1px;background:#808080;"></div>
<div style="left:781px;top:460px;width:1px;height:212px;background:#808080;"></div>
<div style="left:782px;top:461px;width:541px;height:16px;background:#d4d0c8;"></div>
<div style="left:782px;top:477px;width:541px;height:1px;background:#808080;"></div>
<div style="left:782px;top:461px;width:21px;height:1px;background:#ffffff;"></div>
<div style="left:782px;top:461px;width:1px;height:16px;background:#ffffff;"></div>
<div style="left:803px;top:461px;width:1px;height:16px;background:#808080;"></div>
<div style="left:804px;top:461px;width:99px;height:1px;background:#ffffff;"></div>
<div style="left:804px;top:461px;width:1px;height:16px;background:#ffffff;"></div>
<div style="left:903px;top:461px;width:1px;height:16px;background:#808080;"></div>
<div style="left:807px;top:463px;font-size:13.5px;line-height:13.5px;color:#000000;width:95px;overflow:hidden;white-space:nowrap;">Address</div>
<svg style="left:891px;top:465px" width="10" height="9" viewBox="0 0 10 9"><path d="M4.5,0.5 L8.5,8 H0.5 Z" fill="#ffffff" stroke="#a8a8a8"/></svg>
<div style="left:904px;top:461px;width:89px;height:1px;background:#ffffff;"></div>
<div style="left:904px;top:461px;width:1px;height:16px;background:#ffffff;"></div>
<div style="left:993px;top:461px;width:1px;height:16px;background:#808080;"></div>
<div style="left:907px;top:463px;font-size:13.5px;line-height:13.5px;color:#000000;width:85px;overflow:hidden;white-space:nowrap;">Network</div>
<div style="left:994px;top:461px;width:89px;height:1px;background:#ffffff;"></div>
<div style="left:994px;top:461px;width:1px;height:16px;background:#ffffff;"></div>
<div style="left:1083px;top:461px;width:1px;height:16px;background:#808080;"></div>
<div style="left:997px;top:463px;font-size:13.5px;line-height:13.5px;color:#000000;width:85px;overflow:hidden;white-space:nowrap;">Interface</div>
<div style="left:1084px;top:461px;width:222px;height:1px;background:#ffffff;"></div>
<div style="left:1084px;top:461px;width:1px;height:16px;background:#ffffff;"></div>
<div style="left:1306px;top:461px;width:1px;height:16px;background:#808080;"></div>
<div style="left:1307px;top:461px;width:16px;height:1px;background:#ffffff;"></div>
<div style="left:1307px;top:461px;width:1px;height:16px;background:#ffffff;"></div>
<div style="left:1307px;top:461px;width:16px;height:16px;background:#d4d0c8;"></div>
<div style="left:1307px;top:461px;width:16px;height:1px;background:#ffffff;"></div>
<div style="left:1307px;top:461px;width:1px;height:16px;background:#ffffff;"></div>
<div style="left:1322px;top:461px;width:1px;height:16px;background:#808080;"></div>
<svg style="left:1309px;top:467px" width="11" height="6" viewBox="0 0 11 6"><path d="M0,0 H11 L5.5,6 Z" fill="#000"/></svg>
<div style="left:785px;top:479.5px;font-size:13.5px;line-height:13.5px;color:#000000;width:17px;overflow:hidden;white-space:nowrap;height:14px;line-height:13.5px;">D</div>
<svg style="left:807px;top:479px" width="12" height="13" viewBox="0 0 12 13"><path d="M4.5,0.5 H7.5 V3.5 H11.5 V6.5 H7.5 V12.5 H4.5 V6.5 H0.5 V3.5 H4.5 Z" fill="#f0e860" stroke="#202020"/></svg>
<div style="left:823px;top:479.5px;font-size:13.5px;line-height:13.5px;color:#000000;letter-spacing:-0.45px;width:79px;overflow:hidden;white-space:nowrap;height:14px;line-height:13.5px;">10.8.1.253/23</div>
<div style="left:907px;top:479.5px;font-size:13.5px;line-height:13.5px;color:#000000;letter-spacing:-0.45px;width:85px;overflow:hidden;white-space:nowrap;height:14px;line-height:13.5px;">10.8.0.0</div>
<div style="left:997px;top:479.5px;font-size:13.5px;line-height:13.5px;color:#000000;width:85px;overflow:hidden;white-space:nowrap;height:14px;line-height:13.5px;">ether1</div>
<div style="left:803px;top:478px;width:1px;height:14px;background:#d8d8d8;"></div>
<div style="left:903px;top:478px;width:1px;height:14px;background:#d8d8d8;"></div>
<div style="left:993px;top:478px;width:1px;height:14px;background:#d8d8d8;"></div>
<div style="left:1083px;top:478px;width:1px;height:14px;background:#d8d8d8;"></div>
<div style="left:782px;top:492px;width:541px;height:1px;background:#d8d8d8;"></div>
<div style="left:797px;top:494.5px;font-size:13.5px;line-height:13.5px;color:#000000;letter-spacing:-0.25px;">;;; HotSpot network</div>
<div style="left:782px;top:507px;width:541px;height:1px;background:#d8d8d8;"></div>
<svg style="left:807px;top:509px" width="12" height="13" viewBox="0 0 12 13"><path d="M4.5,0.5 H7.5 V3.5 H11.5 V6.5 H7.5 V12.5 H4.5 V6.5 H0.5 V3.5 H4.5 Z" fill="#f0e860" stroke="#202020"/></svg>
<div style="left:823px;top:509.5px;font-size:13.5px;line-height:13.5px;color:#000000;letter-spacing:-0.45px;width:79px;overflow:hidden;white-space:nowrap;height:14px;line-height:13.5px;">10.20.0.1/22</div>
<div style="left:907px;top:509.5px;font-size:13.5px;line-height:13.5px;color:#000000;letter-spacing:-0.45px;width:85px;overflow:hidden;white-space:nowrap;height:14px;line-height:13.5px;">10.20.0.0</div>
<div style="left:997px;top:509.5px;font-size:13.5px;line-height:13.5px;color:#000000;width:85px;overflow:hidden;white-space:nowrap;height:14px;line-height:13.5px;">hs-bridge</div>
<div style="left:803px;top:508px;width:1px;height:14px;background:#d8d8d8;"></div>
<div style="left:903px;top:508px;width:1px;height:14px;background:#d8d8d8;"></div>
<div style="left:993px;top:508px;width:1px;height:14px;background:#d8d8d8;"></div>
<div style="left:1083px;top:508px;width:1px;height:14px;background:#d8d8d8;"></div>
<div style="left:782px;top:522px;width:541px;height:1px;background:#d8d8d8;"></div>
<div style="left:797px;top:524.5px;font-size:13.5px;line-height:13.5px;color:#000000;letter-spacing:-0.25px;">;;; Internet network</div>
<div style="left:782px;top:537px;width:541px;height:1px;background:#d8d8d8;"></div>
<svg style="left:807px;top:539px" width="12" height="13" viewBox="0 0 12 13"><path d="M4.5,0.5 H7.5 V3.5 H11.5 V6.5 H7.5 V12.5 H4.5 V6.5 H0.5 V3.5 H4.5 Z" fill="#f0e860" stroke="#202020"/></svg>
<div style="left:823px;top:539.5px;font-size:13.5px;line-height:13.5px;color:#000000;letter-spacing:-0.45px;width:79px;overflow:hidden;white-space:nowrap;height:14px;line-height:13.5px;">192.168.100...</div>
<div style="left:907px;top:539.5px;font-size:13.5px;line-height:13.5px;color:#000000;letter-spacing:-0.45px;width:85px;overflow:hidden;white-space:nowrap;height:14px;line-height:13.5px;">192.168.100.0</div>
<div style="left:997px;top:539.5px;font-size:13.5px;line-height:13.5px;color:#000000;font-style:italic;width:85px;overflow:hidden;white-space:nowrap;height:14px;line-height:13.5px;">ether2</div>
<div style="left:803px;top:538px;width:1px;height:14px;background:#d8d8d8;"></div>
<div style="left:903px;top:538px;width:1px;height:14px;background:#d8d8d8;"></div>
<div style="left:993px;top:538px;width:1px;height:14px;background:#d8d8d8;"></div>
<div style="left:1083px;top:538px;width:1px;height:14px;background:#d8d8d8;"></div>
<div style="left:782px;top:552px;width:541px;height:1px;background:#d8d8d8;"></div>
<div style="left:781px;top:672px;width:542px;height:1px;background:#808080;"></div>
<div style="left:781px;top:673px;width:1px;height:22px;background:#808080;"></div>
<div style="left:784px;top:677px;font-size:13.5px;line-height:13.5px;color:#000000;">3 items</div>
<div style="left:781px;top:694px;width:543px;height:1px;background:#e8e6e0;"></div>
<div style="left:1328px;top:406px;width:12px;height:295px;background:#ffffff;"></div>
<div style="left:1328px;top:406px;width:12px;height:1px;background:#000;"></div>
<div style="left:1337px;top:407px;width:3px;height:294px;background:#c8c4bc;"></div>
<div style="left:146px;top:699px;width:633px;height:235px;background:#d4d0c8;"></div>
<div style="left:146px;top:699px;width:633px;height:1px;background:#000;"></div>
<div style="left:146px;top:699px;width:1px;height:235px;background:#000;"></div>
<div style="left:778px;top:699px;width:1px;height:235px;background:#000;"></div>
<div style="left:146px;top:933px;width:633px;height:1px;background:#000;"></div>
<div style="left:147px;top:700px;width:631px;height:1px;background:#e8e6e0;"></div>
<div style="left:147px;top:700px;width:1px;height:233px;background:#e8e6e0;"></div>
<div style="left:148px;top:725px;width:1px;height:208px;background:#f4f4f0;"></div>
<div style="left:149px;top:930px;width:629px;height:1px;background:#808080;"></div>
<div style="left:147px;top:931px;width:631px;height:1px;background:#e8e6e0;"></div>
<div style="left:775px;top:725px;width:1px;height:206px;background:#808080;"></div>
<div style="left:776px;top:725px;width:1px;height:207px;background:#e8e6e0;"></div>
<div style="left:148px;top:701px;width:630px;height:24px;background:#aaa69f;"></div>
<div style="left:152px;top:708px;font-size:13.5px;line-height:13.5px;color:#f4f4f4;">DHCP Server</div>
<div style="left:742px;top:705px;width:15px;height:15px;background:#dcdad6;"></div>
<div style="left:742px;top:705px;width:15px;height:15px;border:1px solid #282420;box-sizing:border-box;"></div>
<div style="left:743px;top:706px;width:13px;height:1px;background:#fff;"></div>
<div style="left:743px;top:706px;width:1px;height:13px;background:#fff;"></div>
<div style="left:745px;top:708px;width:9px;height:9px;border:1px solid #222;border-top-width:2px;box-sizing:border-box;"></div>
<div style="left:759px;top:705px;width:15px;height:15px;background:#dcdad6;"></div>
<div style="left:759px;top:705px;width:15px;height:15px;border:1px solid #282420;box-sizing:border-box;"></div>
<div style="left:760px;top:706px;width:13px;height:1px;background:#fff;"></div>
<div style="left:760px;top:706px;width:1px;height:13px;background:#fff;"></div>
<svg style="left:762px;top:708px" width="9" height="9" viewBox="0 0 9 9"><path d="M1.2,1.2 L7.8,7.8 M7.8,1.2 L1.2,7.8" stroke="#1a1a1a" stroke-width="2.2"/></svg>
<div style="left:149px;top:752px;width:627px;height:1px;background:#ffffff;"></div>
<div style="left:203px;top:730px;width:66px;height:22px;background:#c0bcb4;"></div>
<div style="left:203px;top:729px;width:66px;height:1px;background:#e4e2dc;"></div>
<div style="left:203px;top:729px;width:1px;height:23px;background:#ecebe6;"></div>
<div style="left:268px;top:730px;width:1px;height:22px;background:#a8a49c;"></div>
<div style="left:208px;top:735px;font-size:13.5px;line-height:13.5px;color:#000000;">Networks</div>
<div style="left:268px;top:730px;width:58px;height:22px;background:#c0bcb4;"></div>
<div style="left:268px;top:729px;width:58px;height:1px;background:#e4e2dc;"></div>
<div style="left:268px;top:729px;width:1px;height:23px;background:#ecebe6;"></div>
<div style="left:325px;top:730px;width:1px;height:22px;background:#a8a49c;"></div>
<div style="left:273px;top:735px;font-size:13.5px;line-height:13.5px;color:#000000;">Leases</div>
<div style="left:326px;top:730px;width:58px;height:22px;background:#c0bcb4;"></div>
<div style="left:326px;top:729px;width:58px;height:1px;background:#e4e2dc;"></div>
<div style="left:326px;top:729px;width:1px;height:23px;background:#ecebe6;"></div>
<div style="left:383px;top:730px;width:1px;height:22px;background:#a8a49c;"></div>
<div style="left:331px;top:735px;font-size:13.5px;line-height:13.5px;color:#000000;">Options</div>
<div style="left:384px;top:730px;width:82px;height:22px;background:#c0bcb4;"></div>
<div style="left:384px;top:729px;width:82px;height:1px;background:#e4e2dc;"></div>
<div style="left:384px;top:729px;width:1px;height:23px;background:#ecebe6;"></div>
<div style="left:465px;top:730px;width:1px;height:22px;background:#a8a49c;"></div>
<div style="left:389px;top:735px;font-size:13.5px;line-height:13.5px;color:#000000;">Option Sets</div>
<div style="left:466px;top:730px;width:45px;height:22px;background:#c0bcb4;"></div>
<div style="left:466px;top:729px;width:45px;height:1px;background:#e4e2dc;"></div>
<div style="left:466px;top:729px;width:1px;height:23px;background:#ecebe6;"></div>
<div style="left:510px;top:730px;width:1px;height:22px;background:#a8a49c;"></div>
<div style="left:471px;top:735px;font-size:13.5px;line-height:13.5px;color:#000000;">Alerts</div>
<div style="left:150px;top:727px;width:53px;height:26px;background:#d4d0c8;"></div>
<div style="left:150px;top:727px;width:53px;height:1px;background:#ffffff;"></div>
<div style="left:150px;top:727px;width:1px;height:26px;background:#ffffff;"></div>
<div style="left:202px;top:727px;width:1px;height:25px;background:#808080;"></div>
<div style="left:157px;top:733px;font-size:13.5px;line-height:13.5px;color:#000000;">DHCP</div>
<div style="left:777px;top:725px;width:1px;height:206px;background:#e8e6e0;"></div>
<div style="left:151px;top:756px;width:24px;height:24px;background:#d4d0c8;"></div>
<div style="left:151px;top:756px;width:24px;height:1px;background:#808080;"></div>
<div style="left:151px;top:756px;width:1px;height:24px;background:#808080;"></div>
<div style="left:151px;top:779px;width:24px;height:1px;background:#ffffff;"></div>
<div style="left:174px;top:756px;width:1px;height:24px;background:#ffffff;"></div>
<div style="left:152px;top:757px;width:22px;height:1px;background:#ffffff;"></div>
<div style="left:152px;top:757px;width:1px;height:22px;background:#ffffff;"></div>
<div style="left:152px;top:778px;width:22px;height:1px;background:#808080;"></div>
<div style="left:173px;top:757px;width:1px;height:22px;background:#808080;"></div>
<svg style="left:157px;top:762px" width="13" height="13" viewBox="0 0 13 13"><g shape-rendering="crispEdges"><rect x="4" y="0" width="5" height="13" fill="#000040"/><rect x="0" y="4" width="13" height="5" fill="#000040"/><rect x="5" y="1" width="3" height="11" fill="#0808a8"/><rect x="1" y="5" width="11" height="3" fill="#0808a8"/></g></svg>
<div style="left:177px;top:756px;width:24px;height:24px;background:#d4d0c8;"></div>
<div style="left:177px;top:756px;width:24px;height:1px;background:#808080;"></div>
<div style="left:177px;top:756px;width:1px;height:24px;background:#808080;"></div>
<div style="left:177px;top:779px;width:24px;height:1px;background:#ffffff;"></div>
<div style="left:200px;top:756px;width:1px;height:24px;background:#ffffff;"></div>
<div style="left:178px;top:757px;width:22px;height:1px;background:#ffffff;"></div>
<div style="left:178px;top:757px;width:1px;height:22px;background:#ffffff;"></div>
<div style="left:178px;top:778px;width:22px;height:1px;background:#808080;"></div>
<div style="left:199px;top:757px;width:1px;height:22px;background:#808080;"></div>
<svg style="left:183px;top:766px" width="13" height="5" viewBox="0 0 13 5"><g shape-rendering="crispEdges"><rect x="0.5" y="0.5" width="12" height="4" fill="#f4f4f4" stroke="#8a8a8a"/></g></svg>
<div style="left:209px;top:756px;width:24px;height:24px;background:#d4d0c8;"></div>
<div style="left:209px;top:756px;width:24px;height:1px;background:#808080;"></div>
<div style="left:209px;top:756px;width:1px;height:24px;background:#808080;"></div>
<div style="left:209px;top:779px;width:24px;height:1px;background:#ffffff;"></div>
<div style="left:232px;top:756px;width:1px;height:24px;background:#ffffff;"></div>
<div style="left:210px;top:757px;width:22px;height:1px;background:#ffffff;"></div>
<div style="left:210px;top:757px;width:1px;height:22px;background:#ffffff;"></div>
<div style="left:210px;top:778px;width:22px;height:1px;background:#808080;"></div>
<div style="left:231px;top:757px;width:1px;height:22px;background:#808080;"></div>
<svg style="left:214px;top:762px" width="14" height="12" viewBox="0 0 14 12"><path d="M1.5,6 L5,9.5 L12.5,2" fill="none" stroke="#9a9a9a" stroke-width="3.2" stroke-linejoin="miter"/><path d="M1.5,6 L5,9.5 L12.5,2" fill="none" stroke="#f0f0f0" stroke-width="1.2"/></svg>
<div style="left:235px;top:756px;width:24px;height:24px;background:#d4d0c8;"></div>
<div style="left:235px;top:756px;width:24px;height:1px;background:#808080;"></div>
<div style="left:235px;top:756px;width:1px;height:24px;background:#808080;"></div>
<div style="left:235px;top:779px;width:24px;height:1px;background:#ffffff;"></div>
<div style="left:258px;top:756px;width:1px;height:24px;background:#ffffff;"></div>
<div style="left:236px;top:757px;width:22px;height:1px;background:#ffffff;"></div>
<div style="left:236px;top:757px;width:1px;height:22px;background:#ffffff;"></div>
<div style="left:236px;top:778px;width:22px;height:1px;background:#808080;"></div>
<div style="left:257px;top:757px;width:1px;height:22px;background:#808080;"></div>
<svg style="left:241px;top:762px" width="12" height="12" viewBox="0 0 12 12"><path d="M1.5,1.5 L10.5,10.5 M10.5,1.5 L1.5,10.5" fill="none" stroke="#9a9a9a" stroke-width="3.2"/><path d="M1.5,1.5 L10.5,10.5 M10.5,1.5 L1.5,10.5" fill="none" stroke="#f0f0f0" stroke-width="1.2"/></svg>
<div style="left:267px;top:756px;width:24px;height:24px;background:#d4d0c8;"></div>
<div style="left:267px;top:756px;width:24px;height:1px;background:#808080;"></div>
<div style="left:267px;top:756px;width:1px;height:24px;background:#808080;"></div>
<div style="left:267px;top:779px;width:24px;height:1px;background:#ffffff;"></div>
<div style="left:290px;top:756px;width:1px;height:24px;background:#ffffff;"></div>
<div style="left:268px;top:757px;width:22px;height:1px;background:#ffffff;"></div>
<div style="left:268px;top:757px;width:1px;height:22px;background:#ffffff;"></div>
<div style="left:268px;top:778px;width:22px;height:1px;background:#808080;"></div>
<div style="left:289px;top:757px;width:1px;height:22px;background:#808080;"></div>
<svg style="left:273px;top:762px" width="12" height="14" viewBox="0 0 12 14"><defs><linearGradient id="fg" x1="0" x2="1"><stop offset="0" stop-color="#c8d0e8"/><stop offset="1" stop-color="#6878a0"/></linearGradient></defs><path d="M0.8,0.8 H11.2 V2.5 L7.5,7 V13 H4.5 V7 L0.8,2.5 Z" fill="url(#fg)" stroke="#101828" stroke-width="1.5" stroke-linejoin="round"/></svg>
<div style="left:299px;top:756px;width:98px;height:24px;background:#d4d0c8;"></div>
<div style="left:299px;top:756px;width:98px;height:1px;background:#808080;"></div>
<div style="left:299px;top:756px;width:1px;height:24px;background:#808080;"></div>
<div style="left:299px;top:779px;width:98px;height:1px;background:#ffffff;"></div>
<div style="left:396px;top:756px;width:1px;height:24px;background:#ffffff;"></div>
<div style="left:300px;top:757px;width:96px;height:1px;background:#ffffff;"></div>
<div style="left:300px;top:757px;width:1px;height:22px;background:#ffffff;"></div>
<div style="left:300px;top:778px;width:96px;height:1px;background:#808080;"></div>
<div style="left:395px;top:757px;width:1px;height:22px;background:#808080;"></div>
<div style="left:148.0px;top:762px;width:400px;text-align:center;font-size:13.5px;line-height:13.5px;color:#000;">DHCP Config</div>
<div style="left:400px;top:756px;width:96px;height:24px;background:#d4d0c8;"></div>
<div style="left:400px;top:756px;width:96px;height:1px;background:#808080;"></div>
<div style="left:400px;top:756px;width:1px;height:24px;background:#808080;"></div>
<div style="left:400px;top:779px;width:96px;height:1px;background:#ffffff;"></div>
<div style="left:495px;top:756px;width:1px;height:24px;background:#ffffff;"></div>
<div style="left:401px;top:757px;width:94px;height:1px;background:#ffffff;"></div>
<div style="left:401px;top:757px;width:1px;height:22px;background:#ffffff;"></div>
<div style="left:401px;top:778px;width:94px;height:1px;background:#808080;"></div>
<div style="left:494px;top:757px;width:1px;height:22px;background:#808080;"></div>
<div style="left:248.0px;top:762px;width:400px;text-align:center;font-size:13.5px;line-height:13.5px;color:#000;">DHCP Setup</div>
<div style="left:703px;top:758px;width:69px;height:21px;background:#ffffff;"></div>
<div style="left:703px;top:758px;width:69px;height:1px;background:#808080;"></div>
<div style="left:703px;top:758px;width:1px;height:21px;background:#808080;"></div>
<div style="left:703px;top:778px;width:69px;height:1px;background:#808080;"></div>
<div style="left:771px;top:758px;width:1px;height:21px;background:#808080;"></div>
<div style="left:702px;top:779px;width:71px;height:1px;background:#ffffff;"></div>
<div style="left:772px;top:757px;width:1px;height:23px;background:#ffffff;"></div>
<div style="left:709px;top:762px;font-size:12.5px;line-height:12.5px;color:#8c8c8c;font-style:italic;">Find</div>
<div style="left:150px;top:782px;width:624px;height:123px;background:#ffffff;"></div>
<div style="left:150px;top:782px;width:624px;height:1px;background:#808080;"></div>
<div style="left:150px;top:782px;width:1px;height:123px;background:#808080;"></div>
<div style="left:151px;top:783px;width:623px;height:16px;background:#d4d0c8;"></div>
<div style="left:151px;top:799px;width:623px;height:1px;background:#808080;"></div>
<div style="left:151px;top:783px;width:16px;height:1px;background:#ffffff;"></div>
<div style="left:151px;top:783px;width:1px;height:16px;background:#ffffff;"></div>
<div style="left:167px;top:783px;width:1px;height:16px;background:#808080;"></div>
<div style="left:168px;top:783px;width:99px;height:1px;background:#ffffff;"></div>
<div style="left:168px;top:783px;width:1px;height:16px;background:#ffffff;"></div>
<div style="left:267px;top:783px;width:1px;height:16px;background:#808080;"></div>
<div style="left:171px;top:785px;font-size:13.5px;line-height:13.5px;color:#000000;width:95px;overflow:hidden;white-space:nowrap;">Name</div>
<svg style="left:255px;top:787px" width="10" height="9" viewBox="0 0 10 9"><path d="M4.5,0.5 L8.5,8 H0.5 Z" fill="#ffffff" stroke="#a8a8a8"/></svg>
<div style="left:268px;top:783px;width:99px;height:1px;background:#ffffff;"></div>
<div style="left:268px;top:783px;width:1px;height:16px;background:#ffffff;"></div>
<div style="left:367px;top:783px;width:1px;height:16px;background:#808080;"></div>
<div style="left:271px;top:785px;font-size:13.5px;line-height:13.5px;color:#000000;width:95px;overflow:hidden;white-space:nowrap;">Interface</div>
<div style="left:368px;top:783px;width:59px;height:1px;background:#ffffff;"></div>
<div style="left:368px;top:783px;width:1px;height:16px;background:#ffffff;"></div>
<div style="left:427px;top:783px;width:1px;height:16px;background:#808080;"></div>
<div style="left:371px;top:785px;font-size:13.5px;line-height:13.5px;color:#000000;width:55px;overflow:hidden;white-space:nowrap;">Relay</div>
<div style="left:428px;top:783px;width:99px;height:1px;background:#ffffff;"></div>
<div style="left:428px;top:783px;width:1px;height:16px;background:#ffffff;"></div>
<div style="left:527px;top:783px;width:1px;height:16px;background:#808080;"></div>
<div style="left:431px;top:785px;font-size:13.5px;line-height:13.5px;color:#000000;width:95px;overflow:hidden;white-space:nowrap;">Lease Time</div>
<div style="left:528px;top:783px;width:79px;height:1px;background:#ffffff;"></div>
<div style="left:528px;top:783px;width:1px;height:16px;background:#ffffff;"></div>
<div style="left:607px;top:783px;width:1px;height:16px;background:#808080;"></div>
<div style="left:531px;top:785px;font-size:13.5px;line-height:13.5px;color:#000000;width:75px;overflow:hidden;white-space:nowrap;">Address P...</div>
<div style="left:608px;top:783px;width:49px;height:1px;background:#ffffff;"></div>
<div style="left:608px;top:783px;width:1px;height:16px;background:#ffffff;"></div>
<div style="left:657px;top:783px;width:1px;height:16px;background:#808080;"></div>
<div style="left:611px;top:785px;font-size:13.5px;line-height:13.5px;color:#000000;width:45px;overflow:hidden;white-space:nowrap;">Add A...</div>
<div style="left:658px;top:783px;width:99px;height:1px;background:#ffffff;"></div>
<div style="left:658px;top:783px;width:1px;height:16px;background:#ffffff;"></div>
<div style="left:757px;top:783px;width:1px;height:16px;background:#808080;"></div>
<div style="left:758px;top:783px;width:16px;height:1px;background:#ffffff;"></div>
<div style="left:758px;top:783px;width:1px;height:16px;background:#ffffff;"></div>
<div style="left:758px;top:783px;width:16px;height:16px;background:#d4d0c8;"></div>
<div style="left:758px;top:783px;width:16px;height:1px;background:#ffffff;"></div>
<div style="left:758px;top:783px;width:1px;height:16px;background:#ffffff;"></div>
<div style="left:773px;top:783px;width:1px;height:16px;background:#808080;"></div>
<svg style="left:760px;top:789px" width="11" height="6" viewBox="0 0 11 6"><path d="M0,0 H11 L5.5,6 Z" fill="#000"/></svg>
<div style="left:171px;top:801.5px;font-size:13.5px;line-height:13.5px;color:#000000;width:95px;overflow:hidden;white-space:nowrap;height:14px;line-height:13.5px;">hs-dhcp</div>
<div style="left:271px;top:801.5px;font-size:13.5px;line-height:13.5px;color:#000000;width:95px;overflow:hidden;white-space:nowrap;height:14px;line-height:13.5px;">hs-bridge</div>
<div style="left:224px;top:801.5px;width:300px;text-align:right;font-size:13.5px;line-height:13.5px;color:#000000;letter-spacing:-0.45px;">12:00:00</div>
<div style="left:531px;top:801.5px;font-size:13.5px;line-height:13.5px;color:#000000;width:75px;overflow:hidden;white-space:nowrap;height:14px;line-height:13.5px;">hs-pool-1</div>
<div style="left:611px;top:801.5px;font-size:13.5px;line-height:13.5px;color:#000000;width:45px;overflow:hidden;white-space:nowrap;height:14px;line-height:13.5px;">no</div>
<div style="left:167px;top:800px;width:1px;height:14px;background:#d8d8d8;"></div>
<div style="left:267px;top:800px;width:1px;height:14px;background:#d8d8d8;"></div>
<div style="left:367px;top:800px;width:1px;height:14px;background:#d8d8d8;"></div>
<div style="left:427px;top:800px;width:1px;height:14px;background:#d8d8d8;"></div>
<div style="left:527px;top:800px;width:1px;height:14px;background:#d8d8d8;"></div>
<div style="left:607px;top:800px;width:1px;height:14px;background:#d8d8d8;"></div>
<div style="left:657px;top:800px;width:1px;height:14px;background:#d8d8d8;"></div>
<div style="left:151px;top:814px;width:623px;height:1px;background:#d8d8d8;"></div>
<div style="left:171px;top:816.5px;font-size:13.5px;line-height:13.5px;color:#000000;width:95px;overflow:hidden;white-space:nowrap;height:14px;line-height:13.5px;">inet-dhcp</div>
<div style="left:271px;top:816.5px;font-size:13.5px;line-height:13.5px;color:#000000;font-style:italic;width:95px;overflow:hidden;white-space:nowrap;height:14px;line-height:13.5px;">ether2</div>
<div style="left:224px;top:816.5px;width:300px;text-align:right;font-size:13.5px;line-height:13.5px;color:#000000;letter-spacing:-0.45px;">12:00:00</div>
<div style="left:531px;top:816.5px;font-size:13.5px;line-height:13.5px;color:#000000;width:75px;overflow:hidden;white-space:nowrap;height:14px;line-height:13.5px;">inet-pool</div>
<div style="left:611px;top:816.5px;font-size:13.5px;line-height:13.5px;color:#000000;width:45px;overflow:hidden;white-space:nowrap;height:14px;line-height:13.5px;">no</div>
<div style="left:167px;top:815px;width:1px;height:14px;background:#d8d8d8;"></div>
<div style="left:267px;top:815px;width:1px;height:14px;background:#d8d8d8;"></div>
<div style="left:367px;top:815px;width:1px;height:14px;background:#d8d8d8;"></div>
<div style="left:427px;top:815px;width:1px;height:14px;background:#d8d8d8;"></div>
<div style="left:527px;top:815px;width:1px;height:14px;background:#d8d8d8;"></div>
<div style="left:607px;top:815px;width:1px;height:14px;background:#d8d8d8;"></div>
<div style="left:657px;top:815px;width:1px;height:14px;background:#d8d8d8;"></div>
<div style="left:151px;top:829px;width:623px;height:1px;background:#d8d8d8;"></div>
<div style="left:150px;top:905px;width:624px;height:1px;background:#808080;"></div>
<div style="left:150px;top:906px;width:1px;height:22px;background:#808080;"></div>
<div style="left:153px;top:910px;font-size:13.5px;line-height:13.5px;color:#000000;">2 items</div>
<div style="left:150px;top:927px;width:624px;height:1px;background:#e8e6e0;"></div>
<div style="left:778px;top:699px;width:565px;height:239px;background:#d4d0c8;"></div>
<div style="left:778px;top:699px;width:565px;height:1px;background:#000;"></div>
<div style="left:778px;top:699px;width:1px;height:239px;background:#000;"></div>
<div style="left:1342px;top:699px;width:1px;height:239px;background:#000;"></div>
<div style="left:778px;top:937px;width:565px;height:1px;background:#000;"></div>
<div style="left:779px;top:700px;width:563px;height:1px;background:#e8e6e0;"></div>
<div style="left:779px;top:700px;width:1px;height:237px;background:#e8e6e0;"></div>
<div style="left:780px;top:725px;width:1px;height:212px;background:#f4f4f0;"></div>
<div style="left:781px;top:934px;width:561px;height:1px;background:#808080;"></div>
<div style="left:779px;top:935px;width:563px;height:1px;background:#e8e6e0;"></div>
<div style="left:1339px;top:725px;width:1px;height:210px;background:#808080;"></div>
<div style="left:1340px;top:725px;width:1px;height:211px;background:#e8e6e0;"></div>
<div style="left:780px;top:701px;width:562px;height:24px;background:#4b4bc9;"></div>
<div style="left:784px;top:708px;font-size:13.5px;line-height:13.5px;color:#ffffff;">Hotspot</div>
<div style="left:1323px;top:705px;width:15px;height:15px;background:#dcdad6;"></div>
<div style="left:1323px;top:705px;width:15px;height:15px;border:1px solid #282420;box-sizing:border-box;"></div>
<div style="left:1324px;top:706px;width:13px;height:1px;background:#fff;"></div>
<div style="left:1324px;top:706px;width:1px;height:13px;background:#fff;"></div>
<div style="left:1326px;top:708px;width:9px;height:9px;border:1px solid #222;border-top-width:2px;box-sizing:border-box;"></div>
<div style="left:1340px;top:700px;width:2px;height:236px;background:#c8c4bc;"></div>
<div style="left:781px;top:752px;width:560px;height:1px;background:#ffffff;"></div>
<div style="left:844px;top:730px;width:98px;height:22px;background:#c0bcb4;"></div>
<div style="left:844px;top:729px;width:98px;height:1px;background:#e4e2dc;"></div>
<div style="left:844px;top:729px;width:1px;height:23px;background:#ecebe6;"></div>
<div style="left:941px;top:730px;width:1px;height:22px;background:#a8a49c;"></div>
<div style="left:849px;top:735px;font-size:13.5px;line-height:13.5px;color:#000000;">Server Profiles</div>
<div style="left:942px;top:730px;width:49px;height:22px;background:#c0bcb4;"></div>
<div style="left:942px;top:729px;width:49px;height:1px;background:#e4e2dc;"></div>
<div style="left:942px;top:729px;width:1px;height:23px;background:#ecebe6;"></div>
<div style="left:990px;top:730px;width:1px;height:22px;background:#a8a49c;"></div>
<div style="left:947px;top:735px;font-size:13.5px;line-height:13.5px;color:#000000;">Users</div>
<div style="left:991px;top:730px;width:88px;height:22px;background:#c0bcb4;"></div>
<div style="left:991px;top:729px;width:88px;height:1px;background:#e4e2dc;"></div>
<div style="left:991px;top:729px;width:1px;height:23px;background:#ecebe6;"></div>
<div style="left:1078px;top:730px;width:1px;height:22px;background:#a8a49c;"></div>
<div style="left:996px;top:735px;font-size:13.5px;line-height:13.5px;color:#000000;">User Profiles</div>
<div style="left:1079px;top:730px;width:49px;height:22px;background:#c0bcb4;"></div>
<div style="left:1079px;top:729px;width:49px;height:1px;background:#e4e2dc;"></div>
<div style="left:1079px;top:729px;width:1px;height:23px;background:#ecebe6;"></div>
<div style="left:1127px;top:730px;width:1px;height:22px;background:#a8a49c;"></div>
<div style="left:1084px;top:735px;font-size:13.5px;line-height:13.5px;color:#000000;">Active</div>
<div style="left:1128px;top:730px;width:47px;height:22px;background:#c0bcb4;"></div>
<div style="left:1128px;top:729px;width:47px;height:1px;background:#e4e2dc;"></div>
<div style="left:1128px;top:729px;width:1px;height:23px;background:#ecebe6;"></div>
<div style="left:1174px;top:730px;width:1px;height:22px;background:#a8a49c;"></div>
<div style="left:1133px;top:735px;font-size:13.5px;line-height:13.5px;color:#000000;">Hosts</div>
<div style="left:1175px;top:730px;width:79px;height:22px;background:#c0bcb4;"></div>
<div style="left:1175px;top:729px;width:79px;height:1px;background:#e4e2dc;"></div>
<div style="left:1175px;top:729px;width:1px;height:23px;background:#ecebe6;"></div>
<div style="left:1253px;top:730px;width:1px;height:22px;background:#a8a49c;"></div>
<div style="left:1180px;top:735px;font-size:13.5px;line-height:13.5px;color:#000000;">IP Bindings</div>
<div style="left:1254px;top:730px;width:21px;height:22px;background:#c0bcb4;"></div>
<div style="left:1254px;top:729px;width:21px;height:1px;background:#e4e2dc;"></div>
<div style="left:1254px;top:729px;width:1px;height:23px;background:#ecebe6;"></div>
<div style="left:1274px;top:730px;width:1px;height:22px;background:#a8a49c;"></div>
<div style="left:1259px;top:735px;font-size:13.5px;line-height:13.5px;color:#000000;">...</div>
<div style="left:782px;top:727px;width:62px;height:26px;background:#d4d0c8;"></div>
<div style="left:782px;top:727px;width:62px;height:1px;background:#ffffff;"></div>
<div style="left:782px;top:727px;width:1px;height:26px;background:#ffffff;"></div>
<div style="left:843px;top:727px;width:1px;height:25px;background:#808080;"></div>
<div style="left:789px;top:733px;font-size:13.5px;line-height:13.5px;color:#000000;">Servers</div>
<div style="left:783px;top:756px;width:24px;height:24px;background:#d4d0c8;"></div>
<div style="left:783px;top:756px;width:24px;height:1px;background:#808080;"></div>
<div style="left:783px;top:756px;width:1px;height:24px;background:#808080;"></div>
<div style="left:783px;top:779px;width:24px;height:1px;background:#ffffff;"></div>
<div style="left:806px;top:756px;width:1px;height:24px;background:#ffffff;"></div>
<div style="left:784px;top:757px;width:22px;height:1px;background:#ffffff;"></div>
<div style="left:784px;top:757px;width:1px;height:22px;background:#ffffff;"></div>
<div style="left:784px;top:778px;width:22px;height:1px;background:#808080;"></div>
<div style="left:805px;top:757px;width:1px;height:22px;background:#808080;"></div>
<svg style="left:789px;top:762px" width="13" height="13" viewBox="0 0 13 13"><g shape-rendering="crispEdges"><rect x="4" y="0" width="5" height="13" fill="#000040"/><rect x="0" y="4" width="13" height="5" fill="#000040"/><rect x="5" y="1" width="3" height="11" fill="#0808a8"/><rect x="1" y="5" width="11" height="3" fill="#0808a8"/></g></svg>
<div style="left:809px;top:756px;width:24px;height:24px;background:#d4d0c8;"></div>
<div style="left:809px;top:756px;width:24px;height:1px;background:#808080;"></div>
<div style="left:809px;top:756px;width:1px;height:24px;background:#808080;"></div>
<div style="left:809px;top:779px;width:24px;height:1px;background:#ffffff;"></div>
<div style="left:832px;top:756px;width:1px;height:24px;background:#ffffff;"></div>
<div style="left:810px;top:757px;width:22px;height:1px;background:#ffffff;"></div>
<div style="left:810px;top:757px;width:1px;height:22px;background:#ffffff;"></div>
<div style="left:810px;top:778px;width:22px;height:1px;background:#808080;"></div>
<div style="left:831px;top:757px;width:1px;height:22px;background:#808080;"></div>
<svg style="left:815px;top:766px" width="13" height="5" viewBox="0 0 13 5"><g shape-rendering="crispEdges"><rect x="0.5" y="0.5" width="12" height="4" fill="#f4f4f4" stroke="#8a8a8a"/></g></svg>
<div style="left:841px;top:756px;width:24px;height:24px;background:#d4d0c8;"></div>
<div style="left:841px;top:756px;width:24px;height:1px;background:#808080;"></div>
<div style="left:841px;top:756px;width:1px;height:24px;background:#808080;"></div>
<div style="left:841px;top:779px;width:24px;height:1px;background:#ffffff;"></div>
<div style="left:864px;top:756px;width:1px;height:24px;background:#ffffff;"></div>
<div style="left:842px;top:757px;width:22px;height:1px;background:#ffffff;"></div>
<div style="left:842px;top:757px;width:1px;height:22px;background:#ffffff;"></div>
<div style="left:842px;top:778px;width:22px;height:1px;background:#808080;"></div>
<div style="left:863px;top:757px;width:1px;height:22px;background:#808080;"></div>
<svg style="left:846px;top:762px" width="14" height="12" viewBox="0 0 14 12"><path d="M1.5,6 L5,9.5 L12.5,2" fill="none" stroke="#9a9a9a" stroke-width="3.2" stroke-linejoin="miter"/><path d="M1.5,6 L5,9.5 L12.5,2" fill="none" stroke="#f0f0f0" stroke-width="1.2"/></svg>
<div style="left:867px;top:756px;width:24px;height:24px;background:#d4d0c8;"></div>
<div style="left:867px;top:756px;width:24px;height:1px;background:#808080;"></div>
<div style="left:867px;top:756px;width:1px;height:24px;background:#808080;"></div>
<div style="left:867px;top:779px;width:24px;height:1px;background:#ffffff;"></div>
<div style="left:890px;top:756px;width:1px;height:24px;background:#ffffff;"></div>
<div style="left:868px;top:757px;width:22px;height:1px;background:#ffffff;"></div>
<div style="left:868px;top:757px;width:1px;height:22px;background:#ffffff;"></div>
<div style="left:868px;top:778px;width:22px;height:1px;background:#808080;"></div>
<div style="left:889px;top:757px;width:1px;height:22px;background:#808080;"></div>
<svg style="left:873px;top:762px" width="12" height="12" viewBox="0 0 12 12"><path d="M1.5,1.5 L10.5,10.5 M10.5,1.5 L1.5,10.5" fill="none" stroke="#9a9a9a" stroke-width="3.2"/><path d="M1.5,1.5 L10.5,10.5 M10.5,1.5 L1.5,10.5" fill="none" stroke="#f0f0f0" stroke-width="1.2"/></svg>
<div style="left:899px;top:756px;width:24px;height:24px;background:#d4d0c8;"></div>
<div style="left:899px;top:756px;width:24px;height:1px;background:#808080;"></div>
<div style="left:899px;top:756px;width:1px;height:24px;background:#808080;"></div>
<div style="left:899px;top:779px;width:24px;height:1px;background:#ffffff;"></div>
<div style="left:922px;top:756px;width:1px;height:24px;background:#ffffff;"></div>
<div style="left:900px;top:757px;width:22px;height:1px;background:#ffffff;"></div>
<div style="left:900px;top:757px;width:1px;height:22px;background:#ffffff;"></div>
<div style="left:900px;top:778px;width:22px;height:1px;background:#808080;"></div>
<div style="left:921px;top:757px;width:1px;height:22px;background:#808080;"></div>
<svg style="left:905px;top:762px" width="12" height="14" viewBox="0 0 12 14"><defs><linearGradient id="fg" x1="0" x2="1"><stop offset="0" stop-color="#c8d0e8"/><stop offset="1" stop-color="#6878a0"/></linearGradient></defs><path d="M0.8,0.8 H11.2 V2.5 L7.5,7 V13 H4.5 V7 L0.8,2.5 Z" fill="url(#fg)" stroke="#101828" stroke-width="1.5" stroke-linejoin="round"/></svg>
<div style="left:931px;top:756px;width:96px;height:24px;background:#d4d0c8;"></div>
<div style="left:931px;top:756px;width:96px;height:1px;background:#808080;"></div>
<div style="left:931px;top:756px;width:1px;height:24px;background:#808080;"></div>
<div style="left:931px;top:779px;width:96px;height:1px;background:#ffffff;"></div>
<div style="left:1026px;top:756px;width:1px;height:24px;background:#ffffff;"></div>
<div style="left:932px;top:757px;width:94px;height:1px;background:#ffffff;"></div>
<div style="left:932px;top:757px;width:1px;height:22px;background:#ffffff;"></div>
<div style="left:932px;top:778px;width:94px;height:1px;background:#808080;"></div>
<div style="left:1025px;top:757px;width:1px;height:22px;background:#808080;"></div>
<div style="left:779.0px;top:762px;width:400px;text-align:center;font-size:13.5px;line-height:13.5px;color:#9a9a9a;">Reset HTML</div>
<div style="left:1029px;top:756px;width:105px;height:24px;background:#d4d0c8;"></div>
<div style="left:1029px;top:756px;width:105px;height:1px;background:#808080;"></div>
<div style="left:1029px;top:756px;width:1px;height:24px;background:#808080;"></div>
<div style="left:1029px;top:779px;width:105px;height:1px;background:#ffffff;"></div>
<div style="left:1133px;top:756px;width:1px;height:24px;background:#ffffff;"></div>
<div style="left:1030px;top:757px;width:103px;height:1px;background:#ffffff;"></div>
<div style="left:1030px;top:757px;width:1px;height:22px;background:#ffffff;"></div>
<div style="left:1030px;top:778px;width:103px;height:1px;background:#808080;"></div>
<div style="left:1132px;top:757px;width:1px;height:22px;background:#808080;"></div>
<div style="left:881.5px;top:762px;width:400px;text-align:center;font-size:13.5px;line-height:13.5px;color:#000;">Hotspot Setup</div>
<div style="left:1283px;top:758px;width:68px;height:21px;background:#ffffff;"></div>
<div style="left:1283px;top:758px;width:68px;height:1px;background:#808080;"></div>
<div style="left:1283px;top:758px;width:1px;height:21px;background:#808080;"></div>
<div style="left:1283px;top:778px;width:68px;height:1px;background:#808080;"></div>
<div style="left:1350px;top:758px;width:1px;height:21px;background:#808080;"></div>
<div style="left:1282px;top:779px;width:70px;height:1px;background:#ffffff;"></div>
<div style="left:1351px;top:757px;width:1px;height:23px;background:#ffffff;"></div>
<div style="left:1289px;top:762px;font-size:12.5px;line-height:12.5px;color:#8c8c8c;font-style:italic;">Find</div>
<div style="left:782px;top:782px;width:559px;height:125px;background:#ffffff;"></div>
<div style="left:782px;top:782px;width:559px;height:1px;background:#808080;"></div>
<div style="left:782px;top:782px;width:1px;height:125px;background:#808080;"></div>
<div style="left:783px;top:783px;width:558px;height:16px;background:#d4d0c8;"></div>
<div style="left:783px;top:799px;width:558px;height:1px;background:#808080;"></div>
<div style="left:783px;top:783px;width:22px;height:1px;background:#ffffff;"></div>
<div style="left:783px;top:783px;width:1px;height:16px;background:#ffffff;"></div>
<div style="left:805px;top:783px;width:1px;height:16px;background:#808080;"></div>
<div style="left:806px;top:783px;width:114px;height:1px;background:#ffffff;"></div>
<div style="left:806px;top:783px;width:1px;height:16px;background:#ffffff;"></div>
<div style="left:920px;top:783px;width:1px;height:16px;background:#808080;"></div>
<div style="left:809px;top:785px;font-size:13.5px;line-height:13.5px;color:#000000;width:110px;overflow:hidden;white-space:nowrap;">Name</div>
<svg style="left:908px;top:787px" width="10" height="9" viewBox="0 0 10 9"><path d="M4.5,0.5 L8.5,8 H0.5 Z" fill="#ffffff" stroke="#a8a8a8"/></svg>
<div style="left:921px;top:783px;width:99px;height:1px;background:#ffffff;"></div>
<div style="left:921px;top:783px;width:1px;height:16px;background:#ffffff;"></div>
<div style="left:1020px;top:783px;width:1px;height:16px;background:#808080;"></div>
<div style="left:924px;top:785px;font-size:13.5px;line-height:13.5px;color:#000000;width:95px;overflow:hidden;white-space:nowrap;">Interface</div>
<div style="left:1021px;top:783px;width:79px;height:1px;background:#ffffff;"></div>
<div style="left:1021px;top:783px;width:1px;height:16px;background:#ffffff;"></div>
<div style="left:1100px;top:783px;width:1px;height:16px;background:#808080;"></div>
<div style="left:1024px;top:785px;font-size:13.5px;line-height:13.5px;color:#000000;width:75px;overflow:hidden;white-space:nowrap;">Address P...</div>
<div style="left:1101px;top:783px;width:79px;height:1px;background:#ffffff;"></div>
<div style="left:1101px;top:783px;width:1px;height:16px;background:#ffffff;"></div>
<div style="left:1180px;top:783px;width:1px;height:16px;background:#808080;"></div>
<div style="left:1104px;top:785px;font-size:13.5px;line-height:13.5px;color:#000000;width:75px;overflow:hidden;white-space:nowrap;">Profile</div>
<div style="left:1181px;top:783px;width:64px;height:1px;background:#ffffff;"></div>
<div style="left:1181px;top:783px;width:1px;height:16px;background:#ffffff;"></div>
<div style="left:1245px;top:783px;width:1px;height:16px;background:#808080;"></div>
<div style="left:1184px;top:785px;font-size:13.5px;line-height:13.5px;color:#000000;width:60px;overflow:hidden;white-space:nowrap;">Address...</div>
<div style="left:1246px;top:783px;width:91px;height:1px;background:#ffffff;"></div>
<div style="left:1246px;top:783px;width:1px;height:16px;background:#ffffff;"></div>
<div style="left:1337px;top:783px;width:1px;height:16px;background:#808080;"></div>
<div style="left:1338px;top:783px;width:3px;height:1px;background:#ffffff;"></div>
<div style="left:1338px;top:783px;width:1px;height:16px;background:#ffffff;"></div>
<svg style="left:809px;top:801px" width="14" height="14" viewBox="0 0 14 14"><circle cx="6.5" cy="6" r="5.8" fill="#b02878" stroke="#400828"/><circle cx="4.5" cy="4" r="1.3" fill="#f080c0"/><path d="M5,7.5 H8 V11.5 H9.5 V13 H4 V11.5 H5.5 V9 H5 Z" fill="#f0e040" stroke="#302000" stroke-width="0.8"/></svg>
<div style="left:825px;top:800.5px;font-size:13.5px;line-height:13.5px;color:#000000;width:94px;overflow:hidden;white-space:nowrap;height:13px;line-height:13.5px;">hs:</div>
<div style="left:924px;top:800.5px;font-size:13.5px;line-height:13.5px;color:#000000;width:95px;overflow:hidden;white-space:nowrap;height:13px;line-height:13.5px;">hs-bridge</div>
<div style="left:1024px;top:800.5px;font-size:13.5px;line-height:13.5px;color:#000000;width:75px;overflow:hidden;white-space:nowrap;height:13px;line-height:13.5px;">hs-pool-1</div>
<div style="left:1104px;top:800.5px;font-size:13.5px;line-height:13.5px;color:#000000;width:75px;overflow:hidden;white-space:nowrap;height:13px;line-height:13.5px;">wfspot1</div>
<div style="left:942px;top:800.5px;width:300px;text-align:right;font-size:13.5px;line-height:13.5px;color:#000000;letter-spacing:-0.45px;">2</div>
<div style="left:805px;top:800px;width:1px;height:13px;background:#d8d8d8;"></div>
<div style="left:920px;top:800px;width:1px;height:13px;background:#d8d8d8;"></div>
<div style="left:1020px;top:800px;width:1px;height:13px;background:#d8d8d8;"></div>
<div style="left:1100px;top:800px;width:1px;height:13px;background:#d8d8d8;"></div>
<div style="left:1180px;top:800px;width:1px;height:13px;background:#d8d8d8;"></div>
<div style="left:1245px;top:800px;width:1px;height:13px;background:#d8d8d8;"></div>
<div style="left:1337px;top:800px;width:1px;height:13px;background:#d8d8d8;"></div>
<div style="left:783px;top:813px;width:558px;height:1px;border-bottom:1px dotted #505050;height:0;"></div>
<div style="left:782px;top:907px;width:559px;height:1px;background:#808080;"></div>
<div style="left:782px;top:908px;width:1px;height:22px;background:#808080;"></div>
<div style="left:786px;top:912px;font-size:13.5px;line-height:13.5px;color:#000000;">1 item</div>
<div style="left:782px;top:929px;width:559px;height:1px;background:#e8e6e0;"></div>
<div style="left:779px;top:931px;width:562px;height:1px;background:#808080;"></div>
<div style="left:1340px;top:83px;width:2px;height:853px;background:#d6d2ca;"></div>
<div style="left:1342px;top:0px;width:1px;height:938px;background:#404040;"></div>
<div style="left:1343px;top:0px;width:1px;height:938px;background:#202020;"></div>
<div style="left:2px;top:934px;width:1340px;height:2px;background:#d6d2ca;"></div>
<div style="left:779px;top:932px;width:563px;height:1px;background:#d6d2ca;"></div>
<div style="left:779px;top:933px;width:563px;height:1px;background:#d6d2ca;"></div>
<div style="left:0px;top:936px;width:1344px;height:1px;background:#404040;"></div>
<div style="left:0px;top:937px;width:1344px;height:1px;background:#202020;"></div>
</div></body></html>
